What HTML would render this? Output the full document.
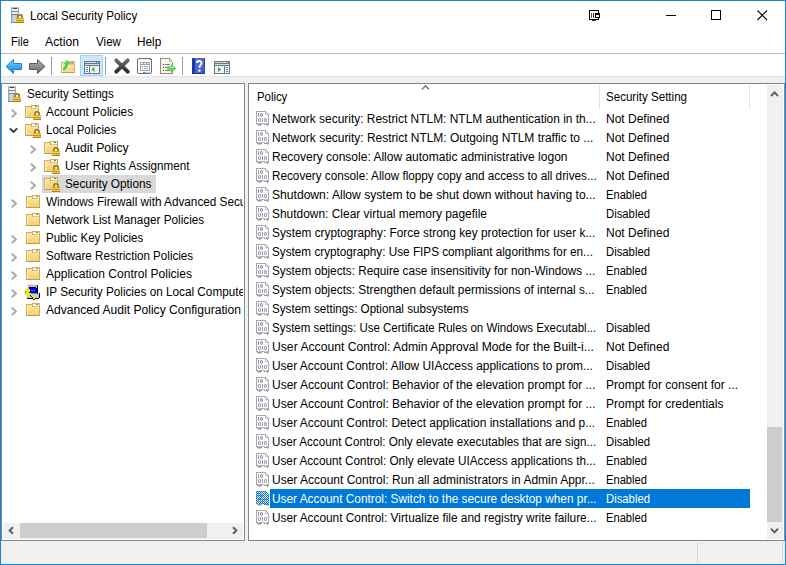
<!DOCTYPE html><html><head><meta charset="utf-8"><style>
html,body{margin:0;padding:0;}
body{width:786px;height:565px;position:relative;overflow:hidden;background:#fff;font-family:'Liberation Sans',sans-serif;font-size:12px;color:#000;}
.t{position:absolute;white-space:pre;line-height:14px;height:14px;}
.a{position:absolute;}
</style></head><body>
<div class="a" style="left:1px;top:77px;width:784px;height:487px;background:#f0f0f0"></div>
<div class="a" style="left:1px;top:53px;width:784px;height:1px;background:#bababa"></div>
<div class="a" style="left:1px;top:76px;width:784px;height:1px;background:#e3e3e3"></div>
<div class="a" style="left:0;top:0;width:784px;height:563px;border:1px solid #1883d7"></div>
<svg style="position:absolute;left:9px;top:5px;" width="18" height="18" viewBox="0 0 18 18" shape-rendering="crispEdges"><rect x="2" y="2" width="8" height="16" fill="#9aa4ac"/><rect x="2" y="2" width="8" height="1" fill="#b8c0c6"/><rect x="3" y="3" width="6" height="14" fill="#b9c4cb"/><rect x="4" y="3" width="4" height="1" fill="#1f4f5f"/><rect x="3" y="4" width="6" height="2" fill="#eef4f7"/><rect x="3" y="6" width="6" height="1" fill="#7a868e"/><rect x="3" y="7" width="6" height="2" fill="#e6eef2"/><rect x="3" y="9" width="6" height="1" fill="#7a868e"/><rect x="3" y="10" width="6" height="7" fill="#b4c2cc"/><rect x="4" y="10" width="3" height="7" fill="#c8d4dc"/><rect x="2" y="17" width="8" height="1" fill="#7c8890"/><rect x="9" y="9" width="4" height="1" fill="#a8873a"/><rect x="8" y="10" width="6" height="3" fill="#a8873a"/><rect x="10" y="11" width="2" height="2" fill="#fbf2cf"/><rect x="7" y="13" width="8" height="5" fill="#c29316"/><rect x="7" y="13" width="8" height="1" fill="#d8aa30"/><rect x="7" y="14" width="8" height="1" fill="#efcd5a"/><rect x="7" y="16" width="8" height="1" fill="#e9c448"/><rect x="7" y="17" width="8" height="1" fill="#a88010"/></svg>
<div class="t" style="left:30px;top:9px;transform:scaleX(0.9682);transform-origin:0 0;">Local Security Policy</div>
<svg style="position:absolute;left:585px;top:5px;" width="20" height="20" viewBox="0 0 20 20" shape-rendering="crispEdges"><rect x="4" y="5" width="10" height="1" fill="#000000"/><rect x="4" y="5" width="1" height="10" fill="#000000"/><rect x="4" y="14" width="10" height="1" fill="#000000"/><rect x="13" y="5" width="1" height="3" fill="#000000"/><rect x="13" y="13" width="1" height="1" fill="#000000"/><rect x="6" y="8" width="1" height="5" fill="#606060"/><rect x="8" y="8" width="1" height="5" fill="#303030"/><rect x="10" y="8" width="5" height="2" fill="#000000"/><rect x="10" y="10" width="1" height="3" fill="#000000"/><rect x="14" y="10" width="1" height="3" fill="#000000"/><rect x="10" y="12" width="5" height="1" fill="#000000"/><rect x="7" y="15" width="4" height="1" fill="#303030"/></svg>
<div class="a" style="left:666px;top:15px;width:10px;height:1px;background:#000"></div>
<div class="a" style="left:711px;top:10px;width:8px;height:8px;border:1px solid #000"></div>
<svg style="position:absolute;left:757px;top:10px;" width="11" height="11" viewBox="0 0 11 11" shape-rendering="crispEdges"><path d="M0.5 0.5 L10 10 M10 0.5 L0.5 10" stroke="#000" stroke-width="1.1" shape-rendering="geometricPrecision"/></svg>
<div class="t" style="left:11px;top:35px;transform:scaleX(0.9202);transform-origin:0 0;">File</div>
<div class="t" style="left:45px;top:35px;transform:scaleX(1.0192);transform-origin:0 0;">Action</div>
<div class="t" style="left:96px;top:35px;transform:scaleX(0.9691);transform-origin:0 0;">View</div>
<div class="t" style="left:137px;top:35px;transform:scaleX(0.9843);transform-origin:0 0;">Help</div>
<div class="a" style="left:1px;top:83px;width:242px;height:456px;border:1px solid #828790;background:#fff"></div>
<div class="a" style="left:248px;top:83px;width:535px;height:456px;border:1px solid #828790;background:#fff"></div>
<div class="a" style="left:697px;top:543px;width:1px;height:20px;background:#d7d7d7"></div>
<div class="a" style="left:782px;top:543px;width:1px;height:20px;background:#d7d7d7"></div>
<div class="a" style="left:2px;top:84px;width:241px;height:438px;overflow:hidden">
<svg class="a" style="left:4px;top:0px" width="18" height="18" shape-rendering="crispEdges"><rect x="2" y="2" width="8" height="16" fill="#9aa4ac"/><rect x="2" y="2" width="8" height="1" fill="#b8c0c6"/><rect x="3" y="3" width="6" height="14" fill="#b9c4cb"/><rect x="4" y="3" width="4" height="1" fill="#1f4f5f"/><rect x="3" y="4" width="6" height="2" fill="#eef4f7"/><rect x="3" y="6" width="6" height="1" fill="#7a868e"/><rect x="3" y="7" width="6" height="2" fill="#e6eef2"/><rect x="3" y="9" width="6" height="1" fill="#7a868e"/><rect x="3" y="10" width="6" height="7" fill="#b4c2cc"/><rect x="4" y="10" width="3" height="7" fill="#c8d4dc"/><rect x="2" y="17" width="8" height="1" fill="#7c8890"/><rect x="9" y="9" width="4" height="1" fill="#a8873a"/><rect x="8" y="10" width="6" height="3" fill="#a8873a"/><rect x="10" y="11" width="2" height="2" fill="#fbf2cf"/><rect x="7" y="13" width="8" height="5" fill="#c29316"/><rect x="7" y="13" width="8" height="1" fill="#d8aa30"/><rect x="7" y="14" width="8" height="1" fill="#efcd5a"/><rect x="7" y="16" width="8" height="1" fill="#e9c448"/><rect x="7" y="17" width="8" height="1" fill="#a88010"/></svg>
<div class="t" style="left:25px;top:3px;transform:scaleX(0.9639);transform-origin:0 0;">Security Settings</div>
<svg class="a" style="left:8px;top:24px" width="8" height="11"><path d="M1.8 1.8 L6 5.5 L1.8 9.2" fill="none" stroke="#a6a6a6" stroke-width="1.8"/></svg>
<svg class="a" style="left:22px;top:19px" width="18" height="18" shape-rendering="crispEdges"><rect x="1" y="3" width="14" height="12" fill="#d3aa58"/><rect x="2" y="4" width="12" height="3" fill="#fae3a0"/><rect x="2" y="7" width="12" height="3" fill="#f8dc8e"/><rect x="2" y="10" width="12" height="4" fill="#f5d47e"/><rect x="2" y="4" width="1" height="10" fill="#fdf0c8"/><rect x="1" y="14" width="14" height="1" fill="#c49a4a"/><rect x="7" y="2" width="8" height="4" fill="#d3aa58"/><rect x="8" y="3" width="6" height="2" fill="#fff2cf"/><rect x="8" y="3" width="3" height="1" fill="#ffffff"/><rect x="11" y="3" width="2" height="1" fill="#3a8ee0"/><rect x="8" y="5" width="6" height="1" fill="#e6c474"/><rect x="8" y="6" width="6" height="1" fill="#fbe6a8"/><rect x="11" y="8" width="4" height="1" fill="#a8873a"/><rect x="10" y="9" width="6" height="3" fill="#a8873a"/><rect x="12" y="10" width="2" height="2" fill="#f8eab8"/><rect x="9" y="12" width="8" height="5" fill="#c5961a"/><rect x="9" y="12" width="8" height="1" fill="#d8aa30"/><rect x="9" y="13" width="8" height="1" fill="#f2d25c"/><rect x="9" y="15" width="8" height="1" fill="#ecc84a"/><rect x="9" y="16" width="8" height="1" fill="#b08410"/></svg>
<div class="t" style="left:44px;top:21px;transform:scaleX(0.9892);transform-origin:0 0;">Account Policies</div>
<svg class="a" style="left:6px;top:42px" width="11" height="9"><path d="M1.8 2.3 L5.5 6 L9.2 2.3" fill="none" stroke="#3c3c3c" stroke-width="1.9"/></svg>
<svg class="a" style="left:22px;top:37px" width="18" height="18" shape-rendering="crispEdges"><rect x="1" y="3" width="14" height="12" fill="#d3aa58"/><rect x="2" y="4" width="12" height="3" fill="#fae3a0"/><rect x="2" y="7" width="12" height="3" fill="#f8dc8e"/><rect x="2" y="10" width="12" height="4" fill="#f5d47e"/><rect x="2" y="4" width="1" height="10" fill="#fdf0c8"/><rect x="1" y="14" width="14" height="1" fill="#c49a4a"/><rect x="7" y="2" width="8" height="4" fill="#d3aa58"/><rect x="8" y="3" width="6" height="2" fill="#fff2cf"/><rect x="8" y="3" width="3" height="1" fill="#ffffff"/><rect x="11" y="3" width="2" height="1" fill="#3a8ee0"/><rect x="8" y="5" width="6" height="1" fill="#e6c474"/><rect x="8" y="6" width="6" height="1" fill="#fbe6a8"/><rect x="11" y="8" width="4" height="1" fill="#a8873a"/><rect x="10" y="9" width="6" height="3" fill="#a8873a"/><rect x="12" y="10" width="2" height="2" fill="#f8eab8"/><rect x="9" y="12" width="8" height="5" fill="#c5961a"/><rect x="9" y="12" width="8" height="1" fill="#d8aa30"/><rect x="9" y="13" width="8" height="1" fill="#f2d25c"/><rect x="9" y="15" width="8" height="1" fill="#ecc84a"/><rect x="9" y="16" width="8" height="1" fill="#b08410"/></svg>
<div class="t" style="left:44px;top:39px;transform:scaleX(0.9567);transform-origin:0 0;">Local Policies</div>
<svg class="a" style="left:27px;top:60px" width="8" height="11"><path d="M1.8 1.8 L6 5.5 L1.8 9.2" fill="none" stroke="#a6a6a6" stroke-width="1.8"/></svg>
<svg class="a" style="left:41px;top:55px" width="18" height="18" shape-rendering="crispEdges"><rect x="1" y="3" width="14" height="12" fill="#d3aa58"/><rect x="2" y="4" width="12" height="3" fill="#fae3a0"/><rect x="2" y="7" width="12" height="3" fill="#f8dc8e"/><rect x="2" y="10" width="12" height="4" fill="#f5d47e"/><rect x="2" y="4" width="1" height="10" fill="#fdf0c8"/><rect x="1" y="14" width="14" height="1" fill="#c49a4a"/><rect x="7" y="2" width="8" height="4" fill="#d3aa58"/><rect x="8" y="3" width="6" height="2" fill="#fff2cf"/><rect x="8" y="3" width="3" height="1" fill="#ffffff"/><rect x="11" y="3" width="2" height="1" fill="#3a8ee0"/><rect x="8" y="5" width="6" height="1" fill="#e6c474"/><rect x="8" y="6" width="6" height="1" fill="#fbe6a8"/><rect x="11" y="8" width="4" height="1" fill="#a8873a"/><rect x="10" y="9" width="6" height="3" fill="#a8873a"/><rect x="12" y="10" width="2" height="2" fill="#f8eab8"/><rect x="9" y="12" width="8" height="5" fill="#c5961a"/><rect x="9" y="12" width="8" height="1" fill="#d8aa30"/><rect x="9" y="13" width="8" height="1" fill="#f2d25c"/><rect x="9" y="15" width="8" height="1" fill="#ecc84a"/><rect x="9" y="16" width="8" height="1" fill="#b08410"/></svg>
<div class="t" style="left:63px;top:57px;transform:scaleX(1.0159);transform-origin:0 0;">Audit Policy</div>
<svg class="a" style="left:27px;top:78px" width="8" height="11"><path d="M1.8 1.8 L6 5.5 L1.8 9.2" fill="none" stroke="#a6a6a6" stroke-width="1.8"/></svg>
<svg class="a" style="left:41px;top:73px" width="18" height="18" shape-rendering="crispEdges"><rect x="1" y="3" width="14" height="12" fill="#d3aa58"/><rect x="2" y="4" width="12" height="3" fill="#fae3a0"/><rect x="2" y="7" width="12" height="3" fill="#f8dc8e"/><rect x="2" y="10" width="12" height="4" fill="#f5d47e"/><rect x="2" y="4" width="1" height="10" fill="#fdf0c8"/><rect x="1" y="14" width="14" height="1" fill="#c49a4a"/><rect x="7" y="2" width="8" height="4" fill="#d3aa58"/><rect x="8" y="3" width="6" height="2" fill="#fff2cf"/><rect x="8" y="3" width="3" height="1" fill="#ffffff"/><rect x="11" y="3" width="2" height="1" fill="#3a8ee0"/><rect x="8" y="5" width="6" height="1" fill="#e6c474"/><rect x="8" y="6" width="6" height="1" fill="#fbe6a8"/><rect x="11" y="8" width="4" height="1" fill="#a8873a"/><rect x="10" y="9" width="6" height="3" fill="#a8873a"/><rect x="12" y="10" width="2" height="2" fill="#f8eab8"/><rect x="9" y="12" width="8" height="5" fill="#c5961a"/><rect x="9" y="12" width="8" height="1" fill="#d8aa30"/><rect x="9" y="13" width="8" height="1" fill="#f2d25c"/><rect x="9" y="15" width="8" height="1" fill="#ecc84a"/><rect x="9" y="16" width="8" height="1" fill="#b08410"/></svg>
<div class="t" style="left:63px;top:75px;transform:scaleX(0.9714);transform-origin:0 0;">User Rights Assignment</div>
<div class="a" style="left:40px;top:91px;width:114px;height:18px;background:#d9d9d9"></div>
<svg class="a" style="left:27px;top:96px" width="8" height="11"><path d="M1.8 1.8 L6 5.5 L1.8 9.2" fill="none" stroke="#a6a6a6" stroke-width="1.8"/></svg>
<svg class="a" style="left:41px;top:91px" width="18" height="18" shape-rendering="crispEdges"><rect x="1" y="3" width="14" height="12" fill="#d3aa58"/><rect x="2" y="4" width="12" height="3" fill="#fae3a0"/><rect x="2" y="7" width="12" height="3" fill="#f8dc8e"/><rect x="2" y="10" width="12" height="4" fill="#f5d47e"/><rect x="2" y="4" width="1" height="10" fill="#fdf0c8"/><rect x="1" y="14" width="14" height="1" fill="#c49a4a"/><rect x="7" y="2" width="8" height="4" fill="#d3aa58"/><rect x="8" y="3" width="6" height="2" fill="#fff2cf"/><rect x="8" y="3" width="3" height="1" fill="#ffffff"/><rect x="11" y="3" width="2" height="1" fill="#3a8ee0"/><rect x="8" y="5" width="6" height="1" fill="#e6c474"/><rect x="8" y="6" width="6" height="1" fill="#fbe6a8"/><rect x="11" y="8" width="4" height="1" fill="#a8873a"/><rect x="10" y="9" width="6" height="3" fill="#a8873a"/><rect x="12" y="10" width="2" height="2" fill="#f8eab8"/><rect x="9" y="12" width="8" height="5" fill="#c5961a"/><rect x="9" y="12" width="8" height="1" fill="#d8aa30"/><rect x="9" y="13" width="8" height="1" fill="#f2d25c"/><rect x="9" y="15" width="8" height="1" fill="#ecc84a"/><rect x="9" y="16" width="8" height="1" fill="#b08410"/></svg>
<div class="t" style="left:63px;top:93px;transform:scaleX(0.9824);transform-origin:0 0;">Security Options</div>
<svg class="a" style="left:8px;top:114px" width="8" height="11"><path d="M1.8 1.8 L6 5.5 L1.8 9.2" fill="none" stroke="#a6a6a6" stroke-width="1.8"/></svg>
<svg class="a" style="left:22px;top:109px" width="18" height="18" shape-rendering="crispEdges"><rect x="2" y="3" width="14" height="12" fill="#d3aa58"/><rect x="3" y="4" width="12" height="3" fill="#fae3a0"/><rect x="3" y="7" width="12" height="3" fill="#f8dc8e"/><rect x="3" y="10" width="12" height="4" fill="#f5d47e"/><rect x="3" y="4" width="1" height="10" fill="#fdf0c8"/><rect x="2" y="14" width="14" height="1" fill="#c49a4a"/><rect x="8" y="2" width="8" height="4" fill="#d3aa58"/><rect x="9" y="3" width="6" height="2" fill="#fff2cf"/><rect x="9" y="3" width="3" height="1" fill="#ffffff"/><rect x="12" y="3" width="2" height="1" fill="#3a8ee0"/><rect x="9" y="5" width="6" height="1" fill="#e6c474"/><rect x="9" y="6" width="6" height="1" fill="#fbe6a8"/></svg>
<div class="t" style="left:44px;top:111px;transform:scaleX(0.9784);transform-origin:0 0;">Windows Firewall with Advanced Security</div>
<svg class="a" style="left:22px;top:127px" width="18" height="18" shape-rendering="crispEdges"><rect x="2" y="3" width="14" height="12" fill="#d3aa58"/><rect x="3" y="4" width="12" height="3" fill="#fae3a0"/><rect x="3" y="7" width="12" height="3" fill="#f8dc8e"/><rect x="3" y="10" width="12" height="4" fill="#f5d47e"/><rect x="3" y="4" width="1" height="10" fill="#fdf0c8"/><rect x="2" y="14" width="14" height="1" fill="#c49a4a"/><rect x="8" y="2" width="8" height="4" fill="#d3aa58"/><rect x="9" y="3" width="6" height="2" fill="#fff2cf"/><rect x="9" y="3" width="3" height="1" fill="#ffffff"/><rect x="12" y="3" width="2" height="1" fill="#3a8ee0"/><rect x="9" y="5" width="6" height="1" fill="#e6c474"/><rect x="9" y="6" width="6" height="1" fill="#fbe6a8"/></svg>
<div class="t" style="left:44px;top:129px;transform:scaleX(0.9801);transform-origin:0 0;">Network List Manager Policies</div>
<svg class="a" style="left:8px;top:150px" width="8" height="11"><path d="M1.8 1.8 L6 5.5 L1.8 9.2" fill="none" stroke="#a6a6a6" stroke-width="1.8"/></svg>
<svg class="a" style="left:22px;top:145px" width="18" height="18" shape-rendering="crispEdges"><rect x="2" y="3" width="14" height="12" fill="#d3aa58"/><rect x="3" y="4" width="12" height="3" fill="#fae3a0"/><rect x="3" y="7" width="12" height="3" fill="#f8dc8e"/><rect x="3" y="10" width="12" height="4" fill="#f5d47e"/><rect x="3" y="4" width="1" height="10" fill="#fdf0c8"/><rect x="2" y="14" width="14" height="1" fill="#c49a4a"/><rect x="8" y="2" width="8" height="4" fill="#d3aa58"/><rect x="9" y="3" width="6" height="2" fill="#fff2cf"/><rect x="9" y="3" width="3" height="1" fill="#ffffff"/><rect x="12" y="3" width="2" height="1" fill="#3a8ee0"/><rect x="9" y="5" width="6" height="1" fill="#e6c474"/><rect x="9" y="6" width="6" height="1" fill="#fbe6a8"/></svg>
<div class="t" style="left:44px;top:147px;transform:scaleX(0.9587);transform-origin:0 0;">Public Key Policies</div>
<svg class="a" style="left:8px;top:168px" width="8" height="11"><path d="M1.8 1.8 L6 5.5 L1.8 9.2" fill="none" stroke="#a6a6a6" stroke-width="1.8"/></svg>
<svg class="a" style="left:22px;top:163px" width="18" height="18" shape-rendering="crispEdges"><rect x="2" y="3" width="14" height="12" fill="#d3aa58"/><rect x="3" y="4" width="12" height="3" fill="#fae3a0"/><rect x="3" y="7" width="12" height="3" fill="#f8dc8e"/><rect x="3" y="10" width="12" height="4" fill="#f5d47e"/><rect x="3" y="4" width="1" height="10" fill="#fdf0c8"/><rect x="2" y="14" width="14" height="1" fill="#c49a4a"/><rect x="8" y="2" width="8" height="4" fill="#d3aa58"/><rect x="9" y="3" width="6" height="2" fill="#fff2cf"/><rect x="9" y="3" width="3" height="1" fill="#ffffff"/><rect x="12" y="3" width="2" height="1" fill="#3a8ee0"/><rect x="9" y="5" width="6" height="1" fill="#e6c474"/><rect x="9" y="6" width="6" height="1" fill="#fbe6a8"/></svg>
<div class="t" style="left:44px;top:165px;transform:scaleX(0.9674);transform-origin:0 0;">Software Restriction Policies</div>
<svg class="a" style="left:8px;top:186px" width="8" height="11"><path d="M1.8 1.8 L6 5.5 L1.8 9.2" fill="none" stroke="#a6a6a6" stroke-width="1.8"/></svg>
<svg class="a" style="left:22px;top:181px" width="18" height="18" shape-rendering="crispEdges"><rect x="2" y="3" width="14" height="12" fill="#d3aa58"/><rect x="3" y="4" width="12" height="3" fill="#fae3a0"/><rect x="3" y="7" width="12" height="3" fill="#f8dc8e"/><rect x="3" y="10" width="12" height="4" fill="#f5d47e"/><rect x="3" y="4" width="1" height="10" fill="#fdf0c8"/><rect x="2" y="14" width="14" height="1" fill="#c49a4a"/><rect x="8" y="2" width="8" height="4" fill="#d3aa58"/><rect x="9" y="3" width="6" height="2" fill="#fff2cf"/><rect x="9" y="3" width="3" height="1" fill="#ffffff"/><rect x="12" y="3" width="2" height="1" fill="#3a8ee0"/><rect x="9" y="5" width="6" height="1" fill="#e6c474"/><rect x="9" y="6" width="6" height="1" fill="#fbe6a8"/></svg>
<div class="t" style="left:44px;top:183px;transform:scaleX(1.0041);transform-origin:0 0;">Application Control Policies</div>
<svg class="a" style="left:8px;top:204px" width="8" height="11"><path d="M1.8 1.8 L6 5.5 L1.8 9.2" fill="none" stroke="#a6a6a6" stroke-width="1.8"/></svg>
<svg class="a" style="left:22px;top:199px" width="18" height="18" shape-rendering="crispEdges"><rect x="4" y="1" width="9" height="1" fill="#e4e4e4"/><rect x="3" y="2" width="10" height="8" fill="#c0c0c0"/><rect x="3" y="2" width="1" height="8" fill="#e0e0e0"/><rect x="13" y="2" width="1" height="9" fill="#000000"/><rect x="5" y="4" width="7" height="1" fill="#000000"/><rect x="5" y="4" width="1" height="6" fill="#000000"/><rect x="6" y="5" width="7" height="5" fill="#0000f0"/><rect x="7" y="7" width="4" height="1" fill="#1f8f8f"/><rect x="4" y="10" width="9" height="1" fill="#909090"/><rect x="2" y="11" width="13" height="4" fill="#c8c8c8"/><rect x="2" y="11" width="1" height="4" fill="#e8e8e8"/><rect x="15" y="10" width="1" height="5" fill="#000000"/><rect x="3" y="15" width="12" height="1" fill="#000000"/><rect x="1" y="6" width="5" height="6" fill="#f0f000"/><rect x="1" y="8" width="1" height="2" fill="#909000"/><rect x="3" y="8" width="2" height="1" fill="#b8b8d8"/><rect x="5" y="10" width="2" height="2" fill="#f0f000"/><rect x="6" y="11" width="2" height="2" fill="#f0f000"/><rect x="7" y="12" width="2" height="2" fill="#f0f000"/><rect x="8" y="13" width="2" height="2" fill="#f0f000"/><rect x="9" y="14" width="2" height="2" fill="#f0f000"/><rect x="6" y="12" width="1" height="1" fill="#202020"/><rect x="7" y="13" width="1" height="1" fill="#202020"/><rect x="8" y="14" width="1" height="1" fill="#202020"/><rect x="9" y="16" width="2" height="1" fill="#202020"/><rect x="5" y="9" width="1" height="1" fill="#202020"/></svg>
<div class="t" style="left:44px;top:201px;transform:scaleX(0.9796);transform-origin:0 0;">IP Security Policies on Local Computer</div>
<svg class="a" style="left:8px;top:222px" width="8" height="11"><path d="M1.8 1.8 L6 5.5 L1.8 9.2" fill="none" stroke="#a6a6a6" stroke-width="1.8"/></svg>
<svg class="a" style="left:22px;top:217px" width="18" height="18" shape-rendering="crispEdges"><rect x="2" y="3" width="14" height="12" fill="#d3aa58"/><rect x="3" y="4" width="12" height="3" fill="#fae3a0"/><rect x="3" y="7" width="12" height="3" fill="#f8dc8e"/><rect x="3" y="10" width="12" height="4" fill="#f5d47e"/><rect x="3" y="4" width="1" height="10" fill="#fdf0c8"/><rect x="2" y="14" width="14" height="1" fill="#c49a4a"/><rect x="8" y="2" width="8" height="4" fill="#d3aa58"/><rect x="9" y="3" width="6" height="2" fill="#fff2cf"/><rect x="9" y="3" width="3" height="1" fill="#ffffff"/><rect x="12" y="3" width="2" height="1" fill="#3a8ee0"/><rect x="9" y="5" width="6" height="1" fill="#e6c474"/><rect x="9" y="6" width="6" height="1" fill="#fbe6a8"/></svg>
<div class="t" style="left:44px;top:219px;transform:scaleX(1.0080);transform-origin:0 0;">Advanced Audit Policy Configuration</div>
</div>
<div class="t" style="left:257px;top:90px;transform:scaleX(0.9464);transform-origin:0 0;">Policy</div>
<div class="t" style="left:606px;top:90px;transform:scaleX(0.9637);transform-origin:0 0;">Security Setting</div>
<div class="a" style="left:599px;top:85px;width:1px;height:24px;background:#e5e5e5"></div>
<div class="a" style="left:749px;top:85px;width:1px;height:24px;background:#e5e5e5"></div>
<svg style="position:absolute;left:421px;top:84px;" width="9" height="7" viewBox="0 0 9 7" shape-rendering="crispEdges"><path d="M1 5.3 L4.5 1.8 L8 5.3" fill="none" stroke="#5a5a5a" stroke-width="1.2" shape-rendering="geometricPrecision"/></svg>
<svg style="position:absolute;left:254px;top:110px;" width="18" height="18" viewBox="0 0 18 18" shape-rendering="crispEdges"><rect x="2" y="1" width="10" height="1" fill="#a8a8a8"/><rect x="2" y="1" width="1" height="12" fill="#a8a8a8"/><rect x="3" y="2" width="9" height="11" fill="#fdfdfd"/><rect x="12" y="2" width="1" height="1" fill="#a8a8a8"/><rect x="13" y="3" width="1" height="1" fill="#a8a8a8"/><rect x="14" y="4" width="1" height="9" fill="#a8a8a8"/><rect x="11" y="2" width="1" height="3" fill="#c4c4c4"/><rect x="11" y="4" width="3" height="1" fill="#c4c4c4"/><rect x="12" y="3" width="1" height="1" fill="#f4f4f4"/><rect x="3" y="12" width="11" height="1" fill="#fdfdfd"/><rect x="4" y="3" width="1" height="4" fill="#9898bc"/><rect x="6" y="3" width="3" height="4" fill="#d4d4e4"/><rect x="6" y="4" width="1" height="2" fill="#9898bc"/><rect x="8" y="4" width="1" height="2" fill="#9898bc"/><rect x="7" y="3" width="1" height="1" fill="#9898bc"/><rect x="7" y="6" width="1" height="1" fill="#9898bc"/><rect x="4" y="8" width="3" height="4" fill="#d4d4e4"/><rect x="5" y="9" width="1" height="2" fill="#fdfdfd"/><rect x="4" y="9" width="1" height="2" fill="#9898bc"/><rect x="6" y="9" width="1" height="2" fill="#9898bc"/><rect x="5" y="8" width="1" height="1" fill="#9898bc"/><rect x="5" y="11" width="1" height="1" fill="#9898bc"/><rect x="8" y="8" width="1" height="4" fill="#9898bc"/><rect x="10" y="8" width="3" height="4" fill="#d4d4e4"/><rect x="11" y="9" width="1" height="2" fill="#fdfdfd"/><rect x="10" y="9" width="1" height="2" fill="#9898bc"/><rect x="12" y="9" width="1" height="2" fill="#9898bc"/><rect x="11" y="8" width="1" height="1" fill="#9898bc"/><rect x="11" y="11" width="1" height="1" fill="#9898bc"/><rect x="2" y="13" width="2" height="1" fill="#a0a0a0"/><rect x="3" y="14" width="5" height="1" fill="#9a9a9a"/><rect x="5" y="13" width="4" height="1" fill="#b0b0b0"/><rect x="4" y="15" width="3" height="1" fill="#c8c8c8"/><rect x="9" y="13" width="2" height="1" fill="#b4b4b4"/><rect x="10" y="14" width="3" height="1" fill="#a4a4a4"/><rect x="12" y="13" width="2" height="1" fill="#b8b8b8"/><rect x="13" y="14" width="1" height="2" fill="#9c9c9c"/><rect x="14" y="13" width="1" height="2" fill="#a8a8a8"/></svg>
<div class="t" style="left:272px;top:112px;transform:scaleX(0.9947);transform-origin:0 0;color:#000">Network security: Restrict NTLM: NTLM authentication in th...</div>
<div class="t" style="left:606px;top:112px;color:#000">Not Defined</div>
<svg style="position:absolute;left:254px;top:129px;" width="18" height="18" viewBox="0 0 18 18" shape-rendering="crispEdges"><rect x="2" y="1" width="10" height="1" fill="#a8a8a8"/><rect x="2" y="1" width="1" height="12" fill="#a8a8a8"/><rect x="3" y="2" width="9" height="11" fill="#fdfdfd"/><rect x="12" y="2" width="1" height="1" fill="#a8a8a8"/><rect x="13" y="3" width="1" height="1" fill="#a8a8a8"/><rect x="14" y="4" width="1" height="9" fill="#a8a8a8"/><rect x="11" y="2" width="1" height="3" fill="#c4c4c4"/><rect x="11" y="4" width="3" height="1" fill="#c4c4c4"/><rect x="12" y="3" width="1" height="1" fill="#f4f4f4"/><rect x="3" y="12" width="11" height="1" fill="#fdfdfd"/><rect x="4" y="3" width="1" height="4" fill="#9898bc"/><rect x="6" y="3" width="3" height="4" fill="#d4d4e4"/><rect x="6" y="4" width="1" height="2" fill="#9898bc"/><rect x="8" y="4" width="1" height="2" fill="#9898bc"/><rect x="7" y="3" width="1" height="1" fill="#9898bc"/><rect x="7" y="6" width="1" height="1" fill="#9898bc"/><rect x="4" y="8" width="3" height="4" fill="#d4d4e4"/><rect x="5" y="9" width="1" height="2" fill="#fdfdfd"/><rect x="4" y="9" width="1" height="2" fill="#9898bc"/><rect x="6" y="9" width="1" height="2" fill="#9898bc"/><rect x="5" y="8" width="1" height="1" fill="#9898bc"/><rect x="5" y="11" width="1" height="1" fill="#9898bc"/><rect x="8" y="8" width="1" height="4" fill="#9898bc"/><rect x="10" y="8" width="3" height="4" fill="#d4d4e4"/><rect x="11" y="9" width="1" height="2" fill="#fdfdfd"/><rect x="10" y="9" width="1" height="2" fill="#9898bc"/><rect x="12" y="9" width="1" height="2" fill="#9898bc"/><rect x="11" y="8" width="1" height="1" fill="#9898bc"/><rect x="11" y="11" width="1" height="1" fill="#9898bc"/><rect x="2" y="13" width="2" height="1" fill="#a0a0a0"/><rect x="3" y="14" width="5" height="1" fill="#9a9a9a"/><rect x="5" y="13" width="4" height="1" fill="#b0b0b0"/><rect x="4" y="15" width="3" height="1" fill="#c8c8c8"/><rect x="9" y="13" width="2" height="1" fill="#b4b4b4"/><rect x="10" y="14" width="3" height="1" fill="#a4a4a4"/><rect x="12" y="13" width="2" height="1" fill="#b8b8b8"/><rect x="13" y="14" width="1" height="2" fill="#9c9c9c"/><rect x="14" y="13" width="1" height="2" fill="#a8a8a8"/></svg>
<div class="t" style="left:272px;top:131px;transform:scaleX(0.9959);transform-origin:0 0;color:#000">Network security: Restrict NTLM: Outgoing NTLM traffic to ...</div>
<div class="t" style="left:606px;top:131px;color:#000">Not Defined</div>
<svg style="position:absolute;left:254px;top:148px;" width="18" height="18" viewBox="0 0 18 18" shape-rendering="crispEdges"><rect x="2" y="1" width="10" height="1" fill="#a8a8a8"/><rect x="2" y="1" width="1" height="12" fill="#a8a8a8"/><rect x="3" y="2" width="9" height="11" fill="#fdfdfd"/><rect x="12" y="2" width="1" height="1" fill="#a8a8a8"/><rect x="13" y="3" width="1" height="1" fill="#a8a8a8"/><rect x="14" y="4" width="1" height="9" fill="#a8a8a8"/><rect x="11" y="2" width="1" height="3" fill="#c4c4c4"/><rect x="11" y="4" width="3" height="1" fill="#c4c4c4"/><rect x="12" y="3" width="1" height="1" fill="#f4f4f4"/><rect x="3" y="12" width="11" height="1" fill="#fdfdfd"/><rect x="4" y="3" width="1" height="4" fill="#9898bc"/><rect x="6" y="3" width="3" height="4" fill="#d4d4e4"/><rect x="6" y="4" width="1" height="2" fill="#9898bc"/><rect x="8" y="4" width="1" height="2" fill="#9898bc"/><rect x="7" y="3" width="1" height="1" fill="#9898bc"/><rect x="7" y="6" width="1" height="1" fill="#9898bc"/><rect x="4" y="8" width="3" height="4" fill="#d4d4e4"/><rect x="5" y="9" width="1" height="2" fill="#fdfdfd"/><rect x="4" y="9" width="1" height="2" fill="#9898bc"/><rect x="6" y="9" width="1" height="2" fill="#9898bc"/><rect x="5" y="8" width="1" height="1" fill="#9898bc"/><rect x="5" y="11" width="1" height="1" fill="#9898bc"/><rect x="8" y="8" width="1" height="4" fill="#9898bc"/><rect x="10" y="8" width="3" height="4" fill="#d4d4e4"/><rect x="11" y="9" width="1" height="2" fill="#fdfdfd"/><rect x="10" y="9" width="1" height="2" fill="#9898bc"/><rect x="12" y="9" width="1" height="2" fill="#9898bc"/><rect x="11" y="8" width="1" height="1" fill="#9898bc"/><rect x="11" y="11" width="1" height="1" fill="#9898bc"/><rect x="2" y="13" width="2" height="1" fill="#a0a0a0"/><rect x="3" y="14" width="5" height="1" fill="#9a9a9a"/><rect x="5" y="13" width="4" height="1" fill="#b0b0b0"/><rect x="4" y="15" width="3" height="1" fill="#c8c8c8"/><rect x="9" y="13" width="2" height="1" fill="#b4b4b4"/><rect x="10" y="14" width="3" height="1" fill="#a4a4a4"/><rect x="12" y="13" width="2" height="1" fill="#b8b8b8"/><rect x="13" y="14" width="1" height="2" fill="#9c9c9c"/><rect x="14" y="13" width="1" height="2" fill="#a8a8a8"/></svg>
<div class="t" style="left:272px;top:150px;color:#000">Recovery console: Allow automatic administrative logon</div>
<div class="t" style="left:606px;top:150px;color:#000">Not Defined</div>
<svg style="position:absolute;left:254px;top:167px;" width="18" height="18" viewBox="0 0 18 18" shape-rendering="crispEdges"><rect x="2" y="1" width="10" height="1" fill="#a8a8a8"/><rect x="2" y="1" width="1" height="12" fill="#a8a8a8"/><rect x="3" y="2" width="9" height="11" fill="#fdfdfd"/><rect x="12" y="2" width="1" height="1" fill="#a8a8a8"/><rect x="13" y="3" width="1" height="1" fill="#a8a8a8"/><rect x="14" y="4" width="1" height="9" fill="#a8a8a8"/><rect x="11" y="2" width="1" height="3" fill="#c4c4c4"/><rect x="11" y="4" width="3" height="1" fill="#c4c4c4"/><rect x="12" y="3" width="1" height="1" fill="#f4f4f4"/><rect x="3" y="12" width="11" height="1" fill="#fdfdfd"/><rect x="4" y="3" width="1" height="4" fill="#9898bc"/><rect x="6" y="3" width="3" height="4" fill="#d4d4e4"/><rect x="6" y="4" width="1" height="2" fill="#9898bc"/><rect x="8" y="4" width="1" height="2" fill="#9898bc"/><rect x="7" y="3" width="1" height="1" fill="#9898bc"/><rect x="7" y="6" width="1" height="1" fill="#9898bc"/><rect x="4" y="8" width="3" height="4" fill="#d4d4e4"/><rect x="5" y="9" width="1" height="2" fill="#fdfdfd"/><rect x="4" y="9" width="1" height="2" fill="#9898bc"/><rect x="6" y="9" width="1" height="2" fill="#9898bc"/><rect x="5" y="8" width="1" height="1" fill="#9898bc"/><rect x="5" y="11" width="1" height="1" fill="#9898bc"/><rect x="8" y="8" width="1" height="4" fill="#9898bc"/><rect x="10" y="8" width="3" height="4" fill="#d4d4e4"/><rect x="11" y="9" width="1" height="2" fill="#fdfdfd"/><rect x="10" y="9" width="1" height="2" fill="#9898bc"/><rect x="12" y="9" width="1" height="2" fill="#9898bc"/><rect x="11" y="8" width="1" height="1" fill="#9898bc"/><rect x="11" y="11" width="1" height="1" fill="#9898bc"/><rect x="2" y="13" width="2" height="1" fill="#a0a0a0"/><rect x="3" y="14" width="5" height="1" fill="#9a9a9a"/><rect x="5" y="13" width="4" height="1" fill="#b0b0b0"/><rect x="4" y="15" width="3" height="1" fill="#c8c8c8"/><rect x="9" y="13" width="2" height="1" fill="#b4b4b4"/><rect x="10" y="14" width="3" height="1" fill="#a4a4a4"/><rect x="12" y="13" width="2" height="1" fill="#b8b8b8"/><rect x="13" y="14" width="1" height="2" fill="#9c9c9c"/><rect x="14" y="13" width="1" height="2" fill="#a8a8a8"/></svg>
<div class="t" style="left:272px;top:169px;transform:scaleX(0.9775);transform-origin:0 0;color:#000">Recovery console: Allow floppy copy and access to all drives...</div>
<div class="t" style="left:606px;top:169px;color:#000">Not Defined</div>
<svg style="position:absolute;left:254px;top:186px;" width="18" height="18" viewBox="0 0 18 18" shape-rendering="crispEdges"><rect x="2" y="1" width="10" height="1" fill="#a8a8a8"/><rect x="2" y="1" width="1" height="12" fill="#a8a8a8"/><rect x="3" y="2" width="9" height="11" fill="#fdfdfd"/><rect x="12" y="2" width="1" height="1" fill="#a8a8a8"/><rect x="13" y="3" width="1" height="1" fill="#a8a8a8"/><rect x="14" y="4" width="1" height="9" fill="#a8a8a8"/><rect x="11" y="2" width="1" height="3" fill="#c4c4c4"/><rect x="11" y="4" width="3" height="1" fill="#c4c4c4"/><rect x="12" y="3" width="1" height="1" fill="#f4f4f4"/><rect x="3" y="12" width="11" height="1" fill="#fdfdfd"/><rect x="4" y="3" width="1" height="4" fill="#9898bc"/><rect x="6" y="3" width="3" height="4" fill="#d4d4e4"/><rect x="6" y="4" width="1" height="2" fill="#9898bc"/><rect x="8" y="4" width="1" height="2" fill="#9898bc"/><rect x="7" y="3" width="1" height="1" fill="#9898bc"/><rect x="7" y="6" width="1" height="1" fill="#9898bc"/><rect x="4" y="8" width="3" height="4" fill="#d4d4e4"/><rect x="5" y="9" width="1" height="2" fill="#fdfdfd"/><rect x="4" y="9" width="1" height="2" fill="#9898bc"/><rect x="6" y="9" width="1" height="2" fill="#9898bc"/><rect x="5" y="8" width="1" height="1" fill="#9898bc"/><rect x="5" y="11" width="1" height="1" fill="#9898bc"/><rect x="8" y="8" width="1" height="4" fill="#9898bc"/><rect x="10" y="8" width="3" height="4" fill="#d4d4e4"/><rect x="11" y="9" width="1" height="2" fill="#fdfdfd"/><rect x="10" y="9" width="1" height="2" fill="#9898bc"/><rect x="12" y="9" width="1" height="2" fill="#9898bc"/><rect x="11" y="8" width="1" height="1" fill="#9898bc"/><rect x="11" y="11" width="1" height="1" fill="#9898bc"/><rect x="2" y="13" width="2" height="1" fill="#a0a0a0"/><rect x="3" y="14" width="5" height="1" fill="#9a9a9a"/><rect x="5" y="13" width="4" height="1" fill="#b0b0b0"/><rect x="4" y="15" width="3" height="1" fill="#c8c8c8"/><rect x="9" y="13" width="2" height="1" fill="#b4b4b4"/><rect x="10" y="14" width="3" height="1" fill="#a4a4a4"/><rect x="12" y="13" width="2" height="1" fill="#b8b8b8"/><rect x="13" y="14" width="1" height="2" fill="#9c9c9c"/><rect x="14" y="13" width="1" height="2" fill="#a8a8a8"/></svg>
<div class="t" style="left:272px;top:188px;transform:scaleX(1.0089);transform-origin:0 0;color:#000">Shutdown: Allow system to be shut down without having to...</div>
<div class="t" style="left:606px;top:188px;transform:scaleX(0.9286);transform-origin:0 0;color:#000">Enabled</div>
<svg style="position:absolute;left:254px;top:205px;" width="18" height="18" viewBox="0 0 18 18" shape-rendering="crispEdges"><rect x="2" y="1" width="10" height="1" fill="#a8a8a8"/><rect x="2" y="1" width="1" height="12" fill="#a8a8a8"/><rect x="3" y="2" width="9" height="11" fill="#fdfdfd"/><rect x="12" y="2" width="1" height="1" fill="#a8a8a8"/><rect x="13" y="3" width="1" height="1" fill="#a8a8a8"/><rect x="14" y="4" width="1" height="9" fill="#a8a8a8"/><rect x="11" y="2" width="1" height="3" fill="#c4c4c4"/><rect x="11" y="4" width="3" height="1" fill="#c4c4c4"/><rect x="12" y="3" width="1" height="1" fill="#f4f4f4"/><rect x="3" y="12" width="11" height="1" fill="#fdfdfd"/><rect x="4" y="3" width="1" height="4" fill="#9898bc"/><rect x="6" y="3" width="3" height="4" fill="#d4d4e4"/><rect x="6" y="4" width="1" height="2" fill="#9898bc"/><rect x="8" y="4" width="1" height="2" fill="#9898bc"/><rect x="7" y="3" width="1" height="1" fill="#9898bc"/><rect x="7" y="6" width="1" height="1" fill="#9898bc"/><rect x="4" y="8" width="3" height="4" fill="#d4d4e4"/><rect x="5" y="9" width="1" height="2" fill="#fdfdfd"/><rect x="4" y="9" width="1" height="2" fill="#9898bc"/><rect x="6" y="9" width="1" height="2" fill="#9898bc"/><rect x="5" y="8" width="1" height="1" fill="#9898bc"/><rect x="5" y="11" width="1" height="1" fill="#9898bc"/><rect x="8" y="8" width="1" height="4" fill="#9898bc"/><rect x="10" y="8" width="3" height="4" fill="#d4d4e4"/><rect x="11" y="9" width="1" height="2" fill="#fdfdfd"/><rect x="10" y="9" width="1" height="2" fill="#9898bc"/><rect x="12" y="9" width="1" height="2" fill="#9898bc"/><rect x="11" y="8" width="1" height="1" fill="#9898bc"/><rect x="11" y="11" width="1" height="1" fill="#9898bc"/><rect x="2" y="13" width="2" height="1" fill="#a0a0a0"/><rect x="3" y="14" width="5" height="1" fill="#9a9a9a"/><rect x="5" y="13" width="4" height="1" fill="#b0b0b0"/><rect x="4" y="15" width="3" height="1" fill="#c8c8c8"/><rect x="9" y="13" width="2" height="1" fill="#b4b4b4"/><rect x="10" y="14" width="3" height="1" fill="#a4a4a4"/><rect x="12" y="13" width="2" height="1" fill="#b8b8b8"/><rect x="13" y="14" width="1" height="2" fill="#9c9c9c"/><rect x="14" y="13" width="1" height="2" fill="#a8a8a8"/></svg>
<div class="t" style="left:272px;top:207px;transform:scaleX(0.9949);transform-origin:0 0;color:#000">Shutdown: Clear virtual memory pagefile</div>
<div class="t" style="left:606px;top:207px;transform:scaleX(0.9421);transform-origin:0 0;color:#000">Disabled</div>
<svg style="position:absolute;left:254px;top:224px;" width="18" height="18" viewBox="0 0 18 18" shape-rendering="crispEdges"><rect x="2" y="1" width="10" height="1" fill="#a8a8a8"/><rect x="2" y="1" width="1" height="12" fill="#a8a8a8"/><rect x="3" y="2" width="9" height="11" fill="#fdfdfd"/><rect x="12" y="2" width="1" height="1" fill="#a8a8a8"/><rect x="13" y="3" width="1" height="1" fill="#a8a8a8"/><rect x="14" y="4" width="1" height="9" fill="#a8a8a8"/><rect x="11" y="2" width="1" height="3" fill="#c4c4c4"/><rect x="11" y="4" width="3" height="1" fill="#c4c4c4"/><rect x="12" y="3" width="1" height="1" fill="#f4f4f4"/><rect x="3" y="12" width="11" height="1" fill="#fdfdfd"/><rect x="4" y="3" width="1" height="4" fill="#9898bc"/><rect x="6" y="3" width="3" height="4" fill="#d4d4e4"/><rect x="6" y="4" width="1" height="2" fill="#9898bc"/><rect x="8" y="4" width="1" height="2" fill="#9898bc"/><rect x="7" y="3" width="1" height="1" fill="#9898bc"/><rect x="7" y="6" width="1" height="1" fill="#9898bc"/><rect x="4" y="8" width="3" height="4" fill="#d4d4e4"/><rect x="5" y="9" width="1" height="2" fill="#fdfdfd"/><rect x="4" y="9" width="1" height="2" fill="#9898bc"/><rect x="6" y="9" width="1" height="2" fill="#9898bc"/><rect x="5" y="8" width="1" height="1" fill="#9898bc"/><rect x="5" y="11" width="1" height="1" fill="#9898bc"/><rect x="8" y="8" width="1" height="4" fill="#9898bc"/><rect x="10" y="8" width="3" height="4" fill="#d4d4e4"/><rect x="11" y="9" width="1" height="2" fill="#fdfdfd"/><rect x="10" y="9" width="1" height="2" fill="#9898bc"/><rect x="12" y="9" width="1" height="2" fill="#9898bc"/><rect x="11" y="8" width="1" height="1" fill="#9898bc"/><rect x="11" y="11" width="1" height="1" fill="#9898bc"/><rect x="2" y="13" width="2" height="1" fill="#a0a0a0"/><rect x="3" y="14" width="5" height="1" fill="#9a9a9a"/><rect x="5" y="13" width="4" height="1" fill="#b0b0b0"/><rect x="4" y="15" width="3" height="1" fill="#c8c8c8"/><rect x="9" y="13" width="2" height="1" fill="#b4b4b4"/><rect x="10" y="14" width="3" height="1" fill="#a4a4a4"/><rect x="12" y="13" width="2" height="1" fill="#b8b8b8"/><rect x="13" y="14" width="1" height="2" fill="#9c9c9c"/><rect x="14" y="13" width="1" height="2" fill="#a8a8a8"/></svg>
<div class="t" style="left:272px;top:226px;transform:scaleX(0.9849);transform-origin:0 0;color:#000">System cryptography: Force strong key protection for user k...</div>
<div class="t" style="left:606px;top:226px;color:#000">Not Defined</div>
<svg style="position:absolute;left:254px;top:243px;" width="18" height="18" viewBox="0 0 18 18" shape-rendering="crispEdges"><rect x="2" y="1" width="10" height="1" fill="#a8a8a8"/><rect x="2" y="1" width="1" height="12" fill="#a8a8a8"/><rect x="3" y="2" width="9" height="11" fill="#fdfdfd"/><rect x="12" y="2" width="1" height="1" fill="#a8a8a8"/><rect x="13" y="3" width="1" height="1" fill="#a8a8a8"/><rect x="14" y="4" width="1" height="9" fill="#a8a8a8"/><rect x="11" y="2" width="1" height="3" fill="#c4c4c4"/><rect x="11" y="4" width="3" height="1" fill="#c4c4c4"/><rect x="12" y="3" width="1" height="1" fill="#f4f4f4"/><rect x="3" y="12" width="11" height="1" fill="#fdfdfd"/><rect x="4" y="3" width="1" height="4" fill="#9898bc"/><rect x="6" y="3" width="3" height="4" fill="#d4d4e4"/><rect x="6" y="4" width="1" height="2" fill="#9898bc"/><rect x="8" y="4" width="1" height="2" fill="#9898bc"/><rect x="7" y="3" width="1" height="1" fill="#9898bc"/><rect x="7" y="6" width="1" height="1" fill="#9898bc"/><rect x="4" y="8" width="3" height="4" fill="#d4d4e4"/><rect x="5" y="9" width="1" height="2" fill="#fdfdfd"/><rect x="4" y="9" width="1" height="2" fill="#9898bc"/><rect x="6" y="9" width="1" height="2" fill="#9898bc"/><rect x="5" y="8" width="1" height="1" fill="#9898bc"/><rect x="5" y="11" width="1" height="1" fill="#9898bc"/><rect x="8" y="8" width="1" height="4" fill="#9898bc"/><rect x="10" y="8" width="3" height="4" fill="#d4d4e4"/><rect x="11" y="9" width="1" height="2" fill="#fdfdfd"/><rect x="10" y="9" width="1" height="2" fill="#9898bc"/><rect x="12" y="9" width="1" height="2" fill="#9898bc"/><rect x="11" y="8" width="1" height="1" fill="#9898bc"/><rect x="11" y="11" width="1" height="1" fill="#9898bc"/><rect x="2" y="13" width="2" height="1" fill="#a0a0a0"/><rect x="3" y="14" width="5" height="1" fill="#9a9a9a"/><rect x="5" y="13" width="4" height="1" fill="#b0b0b0"/><rect x="4" y="15" width="3" height="1" fill="#c8c8c8"/><rect x="9" y="13" width="2" height="1" fill="#b4b4b4"/><rect x="10" y="14" width="3" height="1" fill="#a4a4a4"/><rect x="12" y="13" width="2" height="1" fill="#b8b8b8"/><rect x="13" y="14" width="1" height="2" fill="#9c9c9c"/><rect x="14" y="13" width="1" height="2" fill="#a8a8a8"/></svg>
<div class="t" style="left:272px;top:245px;transform:scaleX(0.9780);transform-origin:0 0;color:#000">System cryptography: Use FIPS compliant algorithms for en...</div>
<div class="t" style="left:606px;top:245px;transform:scaleX(0.9421);transform-origin:0 0;color:#000">Disabled</div>
<svg style="position:absolute;left:254px;top:262px;" width="18" height="18" viewBox="0 0 18 18" shape-rendering="crispEdges"><rect x="2" y="1" width="10" height="1" fill="#a8a8a8"/><rect x="2" y="1" width="1" height="12" fill="#a8a8a8"/><rect x="3" y="2" width="9" height="11" fill="#fdfdfd"/><rect x="12" y="2" width="1" height="1" fill="#a8a8a8"/><rect x="13" y="3" width="1" height="1" fill="#a8a8a8"/><rect x="14" y="4" width="1" height="9" fill="#a8a8a8"/><rect x="11" y="2" width="1" height="3" fill="#c4c4c4"/><rect x="11" y="4" width="3" height="1" fill="#c4c4c4"/><rect x="12" y="3" width="1" height="1" fill="#f4f4f4"/><rect x="3" y="12" width="11" height="1" fill="#fdfdfd"/><rect x="4" y="3" width="1" height="4" fill="#9898bc"/><rect x="6" y="3" width="3" height="4" fill="#d4d4e4"/><rect x="6" y="4" width="1" height="2" fill="#9898bc"/><rect x="8" y="4" width="1" height="2" fill="#9898bc"/><rect x="7" y="3" width="1" height="1" fill="#9898bc"/><rect x="7" y="6" width="1" height="1" fill="#9898bc"/><rect x="4" y="8" width="3" height="4" fill="#d4d4e4"/><rect x="5" y="9" width="1" height="2" fill="#fdfdfd"/><rect x="4" y="9" width="1" height="2" fill="#9898bc"/><rect x="6" y="9" width="1" height="2" fill="#9898bc"/><rect x="5" y="8" width="1" height="1" fill="#9898bc"/><rect x="5" y="11" width="1" height="1" fill="#9898bc"/><rect x="8" y="8" width="1" height="4" fill="#9898bc"/><rect x="10" y="8" width="3" height="4" fill="#d4d4e4"/><rect x="11" y="9" width="1" height="2" fill="#fdfdfd"/><rect x="10" y="9" width="1" height="2" fill="#9898bc"/><rect x="12" y="9" width="1" height="2" fill="#9898bc"/><rect x="11" y="8" width="1" height="1" fill="#9898bc"/><rect x="11" y="11" width="1" height="1" fill="#9898bc"/><rect x="2" y="13" width="2" height="1" fill="#a0a0a0"/><rect x="3" y="14" width="5" height="1" fill="#9a9a9a"/><rect x="5" y="13" width="4" height="1" fill="#b0b0b0"/><rect x="4" y="15" width="3" height="1" fill="#c8c8c8"/><rect x="9" y="13" width="2" height="1" fill="#b4b4b4"/><rect x="10" y="14" width="3" height="1" fill="#a4a4a4"/><rect x="12" y="13" width="2" height="1" fill="#b8b8b8"/><rect x="13" y="14" width="1" height="2" fill="#9c9c9c"/><rect x="14" y="13" width="1" height="2" fill="#a8a8a8"/></svg>
<div class="t" style="left:272px;top:264px;transform:scaleX(0.9790);transform-origin:0 0;color:#000">System objects: Require case insensitivity for non-Windows ...</div>
<div class="t" style="left:606px;top:264px;transform:scaleX(0.9286);transform-origin:0 0;color:#000">Enabled</div>
<svg style="position:absolute;left:254px;top:281px;" width="18" height="18" viewBox="0 0 18 18" shape-rendering="crispEdges"><rect x="2" y="1" width="10" height="1" fill="#a8a8a8"/><rect x="2" y="1" width="1" height="12" fill="#a8a8a8"/><rect x="3" y="2" width="9" height="11" fill="#fdfdfd"/><rect x="12" y="2" width="1" height="1" fill="#a8a8a8"/><rect x="13" y="3" width="1" height="1" fill="#a8a8a8"/><rect x="14" y="4" width="1" height="9" fill="#a8a8a8"/><rect x="11" y="2" width="1" height="3" fill="#c4c4c4"/><rect x="11" y="4" width="3" height="1" fill="#c4c4c4"/><rect x="12" y="3" width="1" height="1" fill="#f4f4f4"/><rect x="3" y="12" width="11" height="1" fill="#fdfdfd"/><rect x="4" y="3" width="1" height="4" fill="#9898bc"/><rect x="6" y="3" width="3" height="4" fill="#d4d4e4"/><rect x="6" y="4" width="1" height="2" fill="#9898bc"/><rect x="8" y="4" width="1" height="2" fill="#9898bc"/><rect x="7" y="3" width="1" height="1" fill="#9898bc"/><rect x="7" y="6" width="1" height="1" fill="#9898bc"/><rect x="4" y="8" width="3" height="4" fill="#d4d4e4"/><rect x="5" y="9" width="1" height="2" fill="#fdfdfd"/><rect x="4" y="9" width="1" height="2" fill="#9898bc"/><rect x="6" y="9" width="1" height="2" fill="#9898bc"/><rect x="5" y="8" width="1" height="1" fill="#9898bc"/><rect x="5" y="11" width="1" height="1" fill="#9898bc"/><rect x="8" y="8" width="1" height="4" fill="#9898bc"/><rect x="10" y="8" width="3" height="4" fill="#d4d4e4"/><rect x="11" y="9" width="1" height="2" fill="#fdfdfd"/><rect x="10" y="9" width="1" height="2" fill="#9898bc"/><rect x="12" y="9" width="1" height="2" fill="#9898bc"/><rect x="11" y="8" width="1" height="1" fill="#9898bc"/><rect x="11" y="11" width="1" height="1" fill="#9898bc"/><rect x="2" y="13" width="2" height="1" fill="#a0a0a0"/><rect x="3" y="14" width="5" height="1" fill="#9a9a9a"/><rect x="5" y="13" width="4" height="1" fill="#b0b0b0"/><rect x="4" y="15" width="3" height="1" fill="#c8c8c8"/><rect x="9" y="13" width="2" height="1" fill="#b4b4b4"/><rect x="10" y="14" width="3" height="1" fill="#a4a4a4"/><rect x="12" y="13" width="2" height="1" fill="#b8b8b8"/><rect x="13" y="14" width="1" height="2" fill="#9c9c9c"/><rect x="14" y="13" width="1" height="2" fill="#a8a8a8"/></svg>
<div class="t" style="left:272px;top:283px;transform:scaleX(0.9811);transform-origin:0 0;color:#000">System objects: Strengthen default permissions of internal s...</div>
<div class="t" style="left:606px;top:283px;transform:scaleX(0.9286);transform-origin:0 0;color:#000">Enabled</div>
<svg style="position:absolute;left:254px;top:300px;" width="18" height="18" viewBox="0 0 18 18" shape-rendering="crispEdges"><rect x="2" y="1" width="10" height="1" fill="#a8a8a8"/><rect x="2" y="1" width="1" height="12" fill="#a8a8a8"/><rect x="3" y="2" width="9" height="11" fill="#fdfdfd"/><rect x="12" y="2" width="1" height="1" fill="#a8a8a8"/><rect x="13" y="3" width="1" height="1" fill="#a8a8a8"/><rect x="14" y="4" width="1" height="9" fill="#a8a8a8"/><rect x="11" y="2" width="1" height="3" fill="#c4c4c4"/><rect x="11" y="4" width="3" height="1" fill="#c4c4c4"/><rect x="12" y="3" width="1" height="1" fill="#f4f4f4"/><rect x="3" y="12" width="11" height="1" fill="#fdfdfd"/><rect x="4" y="3" width="1" height="4" fill="#9898bc"/><rect x="6" y="3" width="3" height="4" fill="#d4d4e4"/><rect x="6" y="4" width="1" height="2" fill="#9898bc"/><rect x="8" y="4" width="1" height="2" fill="#9898bc"/><rect x="7" y="3" width="1" height="1" fill="#9898bc"/><rect x="7" y="6" width="1" height="1" fill="#9898bc"/><rect x="4" y="8" width="3" height="4" fill="#d4d4e4"/><rect x="5" y="9" width="1" height="2" fill="#fdfdfd"/><rect x="4" y="9" width="1" height="2" fill="#9898bc"/><rect x="6" y="9" width="1" height="2" fill="#9898bc"/><rect x="5" y="8" width="1" height="1" fill="#9898bc"/><rect x="5" y="11" width="1" height="1" fill="#9898bc"/><rect x="8" y="8" width="1" height="4" fill="#9898bc"/><rect x="10" y="8" width="3" height="4" fill="#d4d4e4"/><rect x="11" y="9" width="1" height="2" fill="#fdfdfd"/><rect x="10" y="9" width="1" height="2" fill="#9898bc"/><rect x="12" y="9" width="1" height="2" fill="#9898bc"/><rect x="11" y="8" width="1" height="1" fill="#9898bc"/><rect x="11" y="11" width="1" height="1" fill="#9898bc"/><rect x="2" y="13" width="2" height="1" fill="#a0a0a0"/><rect x="3" y="14" width="5" height="1" fill="#9a9a9a"/><rect x="5" y="13" width="4" height="1" fill="#b0b0b0"/><rect x="4" y="15" width="3" height="1" fill="#c8c8c8"/><rect x="9" y="13" width="2" height="1" fill="#b4b4b4"/><rect x="10" y="14" width="3" height="1" fill="#a4a4a4"/><rect x="12" y="13" width="2" height="1" fill="#b8b8b8"/><rect x="13" y="14" width="1" height="2" fill="#9c9c9c"/><rect x="14" y="13" width="1" height="2" fill="#a8a8a8"/></svg>
<div class="t" style="left:272px;top:302px;transform:scaleX(0.9697);transform-origin:0 0;color:#000">System settings: Optional subsystems</div>
<svg style="position:absolute;left:254px;top:319px;" width="18" height="18" viewBox="0 0 18 18" shape-rendering="crispEdges"><rect x="2" y="1" width="10" height="1" fill="#a8a8a8"/><rect x="2" y="1" width="1" height="12" fill="#a8a8a8"/><rect x="3" y="2" width="9" height="11" fill="#fdfdfd"/><rect x="12" y="2" width="1" height="1" fill="#a8a8a8"/><rect x="13" y="3" width="1" height="1" fill="#a8a8a8"/><rect x="14" y="4" width="1" height="9" fill="#a8a8a8"/><rect x="11" y="2" width="1" height="3" fill="#c4c4c4"/><rect x="11" y="4" width="3" height="1" fill="#c4c4c4"/><rect x="12" y="3" width="1" height="1" fill="#f4f4f4"/><rect x="3" y="12" width="11" height="1" fill="#fdfdfd"/><rect x="4" y="3" width="1" height="4" fill="#9898bc"/><rect x="6" y="3" width="3" height="4" fill="#d4d4e4"/><rect x="6" y="4" width="1" height="2" fill="#9898bc"/><rect x="8" y="4" width="1" height="2" fill="#9898bc"/><rect x="7" y="3" width="1" height="1" fill="#9898bc"/><rect x="7" y="6" width="1" height="1" fill="#9898bc"/><rect x="4" y="8" width="3" height="4" fill="#d4d4e4"/><rect x="5" y="9" width="1" height="2" fill="#fdfdfd"/><rect x="4" y="9" width="1" height="2" fill="#9898bc"/><rect x="6" y="9" width="1" height="2" fill="#9898bc"/><rect x="5" y="8" width="1" height="1" fill="#9898bc"/><rect x="5" y="11" width="1" height="1" fill="#9898bc"/><rect x="8" y="8" width="1" height="4" fill="#9898bc"/><rect x="10" y="8" width="3" height="4" fill="#d4d4e4"/><rect x="11" y="9" width="1" height="2" fill="#fdfdfd"/><rect x="10" y="9" width="1" height="2" fill="#9898bc"/><rect x="12" y="9" width="1" height="2" fill="#9898bc"/><rect x="11" y="8" width="1" height="1" fill="#9898bc"/><rect x="11" y="11" width="1" height="1" fill="#9898bc"/><rect x="2" y="13" width="2" height="1" fill="#a0a0a0"/><rect x="3" y="14" width="5" height="1" fill="#9a9a9a"/><rect x="5" y="13" width="4" height="1" fill="#b0b0b0"/><rect x="4" y="15" width="3" height="1" fill="#c8c8c8"/><rect x="9" y="13" width="2" height="1" fill="#b4b4b4"/><rect x="10" y="14" width="3" height="1" fill="#a4a4a4"/><rect x="12" y="13" width="2" height="1" fill="#b8b8b8"/><rect x="13" y="14" width="1" height="2" fill="#9c9c9c"/><rect x="14" y="13" width="1" height="2" fill="#a8a8a8"/></svg>
<div class="t" style="left:272px;top:321px;transform:scaleX(0.9569);transform-origin:0 0;color:#000">System settings: Use Certificate Rules on Windows Executabl...</div>
<div class="t" style="left:606px;top:321px;transform:scaleX(0.9421);transform-origin:0 0;color:#000">Disabled</div>
<svg style="position:absolute;left:254px;top:338px;" width="18" height="18" viewBox="0 0 18 18" shape-rendering="crispEdges"><rect x="2" y="1" width="10" height="1" fill="#a8a8a8"/><rect x="2" y="1" width="1" height="12" fill="#a8a8a8"/><rect x="3" y="2" width="9" height="11" fill="#fdfdfd"/><rect x="12" y="2" width="1" height="1" fill="#a8a8a8"/><rect x="13" y="3" width="1" height="1" fill="#a8a8a8"/><rect x="14" y="4" width="1" height="9" fill="#a8a8a8"/><rect x="11" y="2" width="1" height="3" fill="#c4c4c4"/><rect x="11" y="4" width="3" height="1" fill="#c4c4c4"/><rect x="12" y="3" width="1" height="1" fill="#f4f4f4"/><rect x="3" y="12" width="11" height="1" fill="#fdfdfd"/><rect x="4" y="3" width="1" height="4" fill="#9898bc"/><rect x="6" y="3" width="3" height="4" fill="#d4d4e4"/><rect x="6" y="4" width="1" height="2" fill="#9898bc"/><rect x="8" y="4" width="1" height="2" fill="#9898bc"/><rect x="7" y="3" width="1" height="1" fill="#9898bc"/><rect x="7" y="6" width="1" height="1" fill="#9898bc"/><rect x="4" y="8" width="3" height="4" fill="#d4d4e4"/><rect x="5" y="9" width="1" height="2" fill="#fdfdfd"/><rect x="4" y="9" width="1" height="2" fill="#9898bc"/><rect x="6" y="9" width="1" height="2" fill="#9898bc"/><rect x="5" y="8" width="1" height="1" fill="#9898bc"/><rect x="5" y="11" width="1" height="1" fill="#9898bc"/><rect x="8" y="8" width="1" height="4" fill="#9898bc"/><rect x="10" y="8" width="3" height="4" fill="#d4d4e4"/><rect x="11" y="9" width="1" height="2" fill="#fdfdfd"/><rect x="10" y="9" width="1" height="2" fill="#9898bc"/><rect x="12" y="9" width="1" height="2" fill="#9898bc"/><rect x="11" y="8" width="1" height="1" fill="#9898bc"/><rect x="11" y="11" width="1" height="1" fill="#9898bc"/><rect x="2" y="13" width="2" height="1" fill="#a0a0a0"/><rect x="3" y="14" width="5" height="1" fill="#9a9a9a"/><rect x="5" y="13" width="4" height="1" fill="#b0b0b0"/><rect x="4" y="15" width="3" height="1" fill="#c8c8c8"/><rect x="9" y="13" width="2" height="1" fill="#b4b4b4"/><rect x="10" y="14" width="3" height="1" fill="#a4a4a4"/><rect x="12" y="13" width="2" height="1" fill="#b8b8b8"/><rect x="13" y="14" width="1" height="2" fill="#9c9c9c"/><rect x="14" y="13" width="1" height="2" fill="#a8a8a8"/></svg>
<div class="t" style="left:272px;top:340px;transform:scaleX(1.0139);transform-origin:0 0;color:#000">User Account Control: Admin Approval Mode for the Built-i...</div>
<div class="t" style="left:606px;top:340px;color:#000">Not Defined</div>
<svg style="position:absolute;left:254px;top:357px;" width="18" height="18" viewBox="0 0 18 18" shape-rendering="crispEdges"><rect x="2" y="1" width="10" height="1" fill="#a8a8a8"/><rect x="2" y="1" width="1" height="12" fill="#a8a8a8"/><rect x="3" y="2" width="9" height="11" fill="#fdfdfd"/><rect x="12" y="2" width="1" height="1" fill="#a8a8a8"/><rect x="13" y="3" width="1" height="1" fill="#a8a8a8"/><rect x="14" y="4" width="1" height="9" fill="#a8a8a8"/><rect x="11" y="2" width="1" height="3" fill="#c4c4c4"/><rect x="11" y="4" width="3" height="1" fill="#c4c4c4"/><rect x="12" y="3" width="1" height="1" fill="#f4f4f4"/><rect x="3" y="12" width="11" height="1" fill="#fdfdfd"/><rect x="4" y="3" width="1" height="4" fill="#9898bc"/><rect x="6" y="3" width="3" height="4" fill="#d4d4e4"/><rect x="6" y="4" width="1" height="2" fill="#9898bc"/><rect x="8" y="4" width="1" height="2" fill="#9898bc"/><rect x="7" y="3" width="1" height="1" fill="#9898bc"/><rect x="7" y="6" width="1" height="1" fill="#9898bc"/><rect x="4" y="8" width="3" height="4" fill="#d4d4e4"/><rect x="5" y="9" width="1" height="2" fill="#fdfdfd"/><rect x="4" y="9" width="1" height="2" fill="#9898bc"/><rect x="6" y="9" width="1" height="2" fill="#9898bc"/><rect x="5" y="8" width="1" height="1" fill="#9898bc"/><rect x="5" y="11" width="1" height="1" fill="#9898bc"/><rect x="8" y="8" width="1" height="4" fill="#9898bc"/><rect x="10" y="8" width="3" height="4" fill="#d4d4e4"/><rect x="11" y="9" width="1" height="2" fill="#fdfdfd"/><rect x="10" y="9" width="1" height="2" fill="#9898bc"/><rect x="12" y="9" width="1" height="2" fill="#9898bc"/><rect x="11" y="8" width="1" height="1" fill="#9898bc"/><rect x="11" y="11" width="1" height="1" fill="#9898bc"/><rect x="2" y="13" width="2" height="1" fill="#a0a0a0"/><rect x="3" y="14" width="5" height="1" fill="#9a9a9a"/><rect x="5" y="13" width="4" height="1" fill="#b0b0b0"/><rect x="4" y="15" width="3" height="1" fill="#c8c8c8"/><rect x="9" y="13" width="2" height="1" fill="#b4b4b4"/><rect x="10" y="14" width="3" height="1" fill="#a4a4a4"/><rect x="12" y="13" width="2" height="1" fill="#b8b8b8"/><rect x="13" y="14" width="1" height="2" fill="#9c9c9c"/><rect x="14" y="13" width="1" height="2" fill="#a8a8a8"/></svg>
<div class="t" style="left:272px;top:359px;transform:scaleX(0.9941);transform-origin:0 0;color:#000">User Account Control: Allow UIAccess applications to prom...</div>
<div class="t" style="left:606px;top:359px;transform:scaleX(0.9421);transform-origin:0 0;color:#000">Disabled</div>
<svg style="position:absolute;left:254px;top:376px;" width="18" height="18" viewBox="0 0 18 18" shape-rendering="crispEdges"><rect x="2" y="1" width="10" height="1" fill="#a8a8a8"/><rect x="2" y="1" width="1" height="12" fill="#a8a8a8"/><rect x="3" y="2" width="9" height="11" fill="#fdfdfd"/><rect x="12" y="2" width="1" height="1" fill="#a8a8a8"/><rect x="13" y="3" width="1" height="1" fill="#a8a8a8"/><rect x="14" y="4" width="1" height="9" fill="#a8a8a8"/><rect x="11" y="2" width="1" height="3" fill="#c4c4c4"/><rect x="11" y="4" width="3" height="1" fill="#c4c4c4"/><rect x="12" y="3" width="1" height="1" fill="#f4f4f4"/><rect x="3" y="12" width="11" height="1" fill="#fdfdfd"/><rect x="4" y="3" width="1" height="4" fill="#9898bc"/><rect x="6" y="3" width="3" height="4" fill="#d4d4e4"/><rect x="6" y="4" width="1" height="2" fill="#9898bc"/><rect x="8" y="4" width="1" height="2" fill="#9898bc"/><rect x="7" y="3" width="1" height="1" fill="#9898bc"/><rect x="7" y="6" width="1" height="1" fill="#9898bc"/><rect x="4" y="8" width="3" height="4" fill="#d4d4e4"/><rect x="5" y="9" width="1" height="2" fill="#fdfdfd"/><rect x="4" y="9" width="1" height="2" fill="#9898bc"/><rect x="6" y="9" width="1" height="2" fill="#9898bc"/><rect x="5" y="8" width="1" height="1" fill="#9898bc"/><rect x="5" y="11" width="1" height="1" fill="#9898bc"/><rect x="8" y="8" width="1" height="4" fill="#9898bc"/><rect x="10" y="8" width="3" height="4" fill="#d4d4e4"/><rect x="11" y="9" width="1" height="2" fill="#fdfdfd"/><rect x="10" y="9" width="1" height="2" fill="#9898bc"/><rect x="12" y="9" width="1" height="2" fill="#9898bc"/><rect x="11" y="8" width="1" height="1" fill="#9898bc"/><rect x="11" y="11" width="1" height="1" fill="#9898bc"/><rect x="2" y="13" width="2" height="1" fill="#a0a0a0"/><rect x="3" y="14" width="5" height="1" fill="#9a9a9a"/><rect x="5" y="13" width="4" height="1" fill="#b0b0b0"/><rect x="4" y="15" width="3" height="1" fill="#c8c8c8"/><rect x="9" y="13" width="2" height="1" fill="#b4b4b4"/><rect x="10" y="14" width="3" height="1" fill="#a4a4a4"/><rect x="12" y="13" width="2" height="1" fill="#b8b8b8"/><rect x="13" y="14" width="1" height="2" fill="#9c9c9c"/><rect x="14" y="13" width="1" height="2" fill="#a8a8a8"/></svg>
<div class="t" style="left:272px;top:378px;color:#000">User Account Control: Behavior of the elevation prompt for ...</div>
<div class="t" style="left:606px;top:378px;color:#000">Prompt for consent for ...</div>
<svg style="position:absolute;left:254px;top:395px;" width="18" height="18" viewBox="0 0 18 18" shape-rendering="crispEdges"><rect x="2" y="1" width="10" height="1" fill="#a8a8a8"/><rect x="2" y="1" width="1" height="12" fill="#a8a8a8"/><rect x="3" y="2" width="9" height="11" fill="#fdfdfd"/><rect x="12" y="2" width="1" height="1" fill="#a8a8a8"/><rect x="13" y="3" width="1" height="1" fill="#a8a8a8"/><rect x="14" y="4" width="1" height="9" fill="#a8a8a8"/><rect x="11" y="2" width="1" height="3" fill="#c4c4c4"/><rect x="11" y="4" width="3" height="1" fill="#c4c4c4"/><rect x="12" y="3" width="1" height="1" fill="#f4f4f4"/><rect x="3" y="12" width="11" height="1" fill="#fdfdfd"/><rect x="4" y="3" width="1" height="4" fill="#9898bc"/><rect x="6" y="3" width="3" height="4" fill="#d4d4e4"/><rect x="6" y="4" width="1" height="2" fill="#9898bc"/><rect x="8" y="4" width="1" height="2" fill="#9898bc"/><rect x="7" y="3" width="1" height="1" fill="#9898bc"/><rect x="7" y="6" width="1" height="1" fill="#9898bc"/><rect x="4" y="8" width="3" height="4" fill="#d4d4e4"/><rect x="5" y="9" width="1" height="2" fill="#fdfdfd"/><rect x="4" y="9" width="1" height="2" fill="#9898bc"/><rect x="6" y="9" width="1" height="2" fill="#9898bc"/><rect x="5" y="8" width="1" height="1" fill="#9898bc"/><rect x="5" y="11" width="1" height="1" fill="#9898bc"/><rect x="8" y="8" width="1" height="4" fill="#9898bc"/><rect x="10" y="8" width="3" height="4" fill="#d4d4e4"/><rect x="11" y="9" width="1" height="2" fill="#fdfdfd"/><rect x="10" y="9" width="1" height="2" fill="#9898bc"/><rect x="12" y="9" width="1" height="2" fill="#9898bc"/><rect x="11" y="8" width="1" height="1" fill="#9898bc"/><rect x="11" y="11" width="1" height="1" fill="#9898bc"/><rect x="2" y="13" width="2" height="1" fill="#a0a0a0"/><rect x="3" y="14" width="5" height="1" fill="#9a9a9a"/><rect x="5" y="13" width="4" height="1" fill="#b0b0b0"/><rect x="4" y="15" width="3" height="1" fill="#c8c8c8"/><rect x="9" y="13" width="2" height="1" fill="#b4b4b4"/><rect x="10" y="14" width="3" height="1" fill="#a4a4a4"/><rect x="12" y="13" width="2" height="1" fill="#b8b8b8"/><rect x="13" y="14" width="1" height="2" fill="#9c9c9c"/><rect x="14" y="13" width="1" height="2" fill="#a8a8a8"/></svg>
<div class="t" style="left:272px;top:397px;color:#000">User Account Control: Behavior of the elevation prompt for ...</div>
<div class="t" style="left:606px;top:397px;color:#000">Prompt for credentials</div>
<svg style="position:absolute;left:254px;top:414px;" width="18" height="18" viewBox="0 0 18 18" shape-rendering="crispEdges"><rect x="2" y="1" width="10" height="1" fill="#a8a8a8"/><rect x="2" y="1" width="1" height="12" fill="#a8a8a8"/><rect x="3" y="2" width="9" height="11" fill="#fdfdfd"/><rect x="12" y="2" width="1" height="1" fill="#a8a8a8"/><rect x="13" y="3" width="1" height="1" fill="#a8a8a8"/><rect x="14" y="4" width="1" height="9" fill="#a8a8a8"/><rect x="11" y="2" width="1" height="3" fill="#c4c4c4"/><rect x="11" y="4" width="3" height="1" fill="#c4c4c4"/><rect x="12" y="3" width="1" height="1" fill="#f4f4f4"/><rect x="3" y="12" width="11" height="1" fill="#fdfdfd"/><rect x="4" y="3" width="1" height="4" fill="#9898bc"/><rect x="6" y="3" width="3" height="4" fill="#d4d4e4"/><rect x="6" y="4" width="1" height="2" fill="#9898bc"/><rect x="8" y="4" width="1" height="2" fill="#9898bc"/><rect x="7" y="3" width="1" height="1" fill="#9898bc"/><rect x="7" y="6" width="1" height="1" fill="#9898bc"/><rect x="4" y="8" width="3" height="4" fill="#d4d4e4"/><rect x="5" y="9" width="1" height="2" fill="#fdfdfd"/><rect x="4" y="9" width="1" height="2" fill="#9898bc"/><rect x="6" y="9" width="1" height="2" fill="#9898bc"/><rect x="5" y="8" width="1" height="1" fill="#9898bc"/><rect x="5" y="11" width="1" height="1" fill="#9898bc"/><rect x="8" y="8" width="1" height="4" fill="#9898bc"/><rect x="10" y="8" width="3" height="4" fill="#d4d4e4"/><rect x="11" y="9" width="1" height="2" fill="#fdfdfd"/><rect x="10" y="9" width="1" height="2" fill="#9898bc"/><rect x="12" y="9" width="1" height="2" fill="#9898bc"/><rect x="11" y="8" width="1" height="1" fill="#9898bc"/><rect x="11" y="11" width="1" height="1" fill="#9898bc"/><rect x="2" y="13" width="2" height="1" fill="#a0a0a0"/><rect x="3" y="14" width="5" height="1" fill="#9a9a9a"/><rect x="5" y="13" width="4" height="1" fill="#b0b0b0"/><rect x="4" y="15" width="3" height="1" fill="#c8c8c8"/><rect x="9" y="13" width="2" height="1" fill="#b4b4b4"/><rect x="10" y="14" width="3" height="1" fill="#a4a4a4"/><rect x="12" y="13" width="2" height="1" fill="#b8b8b8"/><rect x="13" y="14" width="1" height="2" fill="#9c9c9c"/><rect x="14" y="13" width="1" height="2" fill="#a8a8a8"/></svg>
<div class="t" style="left:272px;top:416px;transform:scaleX(0.9949);transform-origin:0 0;color:#000">User Account Control: Detect application installations and p...</div>
<div class="t" style="left:606px;top:416px;transform:scaleX(0.9286);transform-origin:0 0;color:#000">Enabled</div>
<svg style="position:absolute;left:254px;top:433px;" width="18" height="18" viewBox="0 0 18 18" shape-rendering="crispEdges"><rect x="2" y="1" width="10" height="1" fill="#a8a8a8"/><rect x="2" y="1" width="1" height="12" fill="#a8a8a8"/><rect x="3" y="2" width="9" height="11" fill="#fdfdfd"/><rect x="12" y="2" width="1" height="1" fill="#a8a8a8"/><rect x="13" y="3" width="1" height="1" fill="#a8a8a8"/><rect x="14" y="4" width="1" height="9" fill="#a8a8a8"/><rect x="11" y="2" width="1" height="3" fill="#c4c4c4"/><rect x="11" y="4" width="3" height="1" fill="#c4c4c4"/><rect x="12" y="3" width="1" height="1" fill="#f4f4f4"/><rect x="3" y="12" width="11" height="1" fill="#fdfdfd"/><rect x="4" y="3" width="1" height="4" fill="#9898bc"/><rect x="6" y="3" width="3" height="4" fill="#d4d4e4"/><rect x="6" y="4" width="1" height="2" fill="#9898bc"/><rect x="8" y="4" width="1" height="2" fill="#9898bc"/><rect x="7" y="3" width="1" height="1" fill="#9898bc"/><rect x="7" y="6" width="1" height="1" fill="#9898bc"/><rect x="4" y="8" width="3" height="4" fill="#d4d4e4"/><rect x="5" y="9" width="1" height="2" fill="#fdfdfd"/><rect x="4" y="9" width="1" height="2" fill="#9898bc"/><rect x="6" y="9" width="1" height="2" fill="#9898bc"/><rect x="5" y="8" width="1" height="1" fill="#9898bc"/><rect x="5" y="11" width="1" height="1" fill="#9898bc"/><rect x="8" y="8" width="1" height="4" fill="#9898bc"/><rect x="10" y="8" width="3" height="4" fill="#d4d4e4"/><rect x="11" y="9" width="1" height="2" fill="#fdfdfd"/><rect x="10" y="9" width="1" height="2" fill="#9898bc"/><rect x="12" y="9" width="1" height="2" fill="#9898bc"/><rect x="11" y="8" width="1" height="1" fill="#9898bc"/><rect x="11" y="11" width="1" height="1" fill="#9898bc"/><rect x="2" y="13" width="2" height="1" fill="#a0a0a0"/><rect x="3" y="14" width="5" height="1" fill="#9a9a9a"/><rect x="5" y="13" width="4" height="1" fill="#b0b0b0"/><rect x="4" y="15" width="3" height="1" fill="#c8c8c8"/><rect x="9" y="13" width="2" height="1" fill="#b4b4b4"/><rect x="10" y="14" width="3" height="1" fill="#a4a4a4"/><rect x="12" y="13" width="2" height="1" fill="#b8b8b8"/><rect x="13" y="14" width="1" height="2" fill="#9c9c9c"/><rect x="14" y="13" width="1" height="2" fill="#a8a8a8"/></svg>
<div class="t" style="left:272px;top:435px;transform:scaleX(0.9721);transform-origin:0 0;color:#000">User Account Control: Only elevate executables that are sign...</div>
<div class="t" style="left:606px;top:435px;transform:scaleX(0.9421);transform-origin:0 0;color:#000">Disabled</div>
<svg style="position:absolute;left:254px;top:452px;" width="18" height="18" viewBox="0 0 18 18" shape-rendering="crispEdges"><rect x="2" y="1" width="10" height="1" fill="#a8a8a8"/><rect x="2" y="1" width="1" height="12" fill="#a8a8a8"/><rect x="3" y="2" width="9" height="11" fill="#fdfdfd"/><rect x="12" y="2" width="1" height="1" fill="#a8a8a8"/><rect x="13" y="3" width="1" height="1" fill="#a8a8a8"/><rect x="14" y="4" width="1" height="9" fill="#a8a8a8"/><rect x="11" y="2" width="1" height="3" fill="#c4c4c4"/><rect x="11" y="4" width="3" height="1" fill="#c4c4c4"/><rect x="12" y="3" width="1" height="1" fill="#f4f4f4"/><rect x="3" y="12" width="11" height="1" fill="#fdfdfd"/><rect x="4" y="3" width="1" height="4" fill="#9898bc"/><rect x="6" y="3" width="3" height="4" fill="#d4d4e4"/><rect x="6" y="4" width="1" height="2" fill="#9898bc"/><rect x="8" y="4" width="1" height="2" fill="#9898bc"/><rect x="7" y="3" width="1" height="1" fill="#9898bc"/><rect x="7" y="6" width="1" height="1" fill="#9898bc"/><rect x="4" y="8" width="3" height="4" fill="#d4d4e4"/><rect x="5" y="9" width="1" height="2" fill="#fdfdfd"/><rect x="4" y="9" width="1" height="2" fill="#9898bc"/><rect x="6" y="9" width="1" height="2" fill="#9898bc"/><rect x="5" y="8" width="1" height="1" fill="#9898bc"/><rect x="5" y="11" width="1" height="1" fill="#9898bc"/><rect x="8" y="8" width="1" height="4" fill="#9898bc"/><rect x="10" y="8" width="3" height="4" fill="#d4d4e4"/><rect x="11" y="9" width="1" height="2" fill="#fdfdfd"/><rect x="10" y="9" width="1" height="2" fill="#9898bc"/><rect x="12" y="9" width="1" height="2" fill="#9898bc"/><rect x="11" y="8" width="1" height="1" fill="#9898bc"/><rect x="11" y="11" width="1" height="1" fill="#9898bc"/><rect x="2" y="13" width="2" height="1" fill="#a0a0a0"/><rect x="3" y="14" width="5" height="1" fill="#9a9a9a"/><rect x="5" y="13" width="4" height="1" fill="#b0b0b0"/><rect x="4" y="15" width="3" height="1" fill="#c8c8c8"/><rect x="9" y="13" width="2" height="1" fill="#b4b4b4"/><rect x="10" y="14" width="3" height="1" fill="#a4a4a4"/><rect x="12" y="13" width="2" height="1" fill="#b8b8b8"/><rect x="13" y="14" width="1" height="2" fill="#9c9c9c"/><rect x="14" y="13" width="1" height="2" fill="#a8a8a8"/></svg>
<div class="t" style="left:272px;top:454px;transform:scaleX(0.9785);transform-origin:0 0;color:#000">User Account Control: Only elevate UIAccess applications th...</div>
<div class="t" style="left:606px;top:454px;transform:scaleX(0.9286);transform-origin:0 0;color:#000">Enabled</div>
<svg style="position:absolute;left:254px;top:471px;" width="18" height="18" viewBox="0 0 18 18" shape-rendering="crispEdges"><rect x="2" y="1" width="10" height="1" fill="#a8a8a8"/><rect x="2" y="1" width="1" height="12" fill="#a8a8a8"/><rect x="3" y="2" width="9" height="11" fill="#fdfdfd"/><rect x="12" y="2" width="1" height="1" fill="#a8a8a8"/><rect x="13" y="3" width="1" height="1" fill="#a8a8a8"/><rect x="14" y="4" width="1" height="9" fill="#a8a8a8"/><rect x="11" y="2" width="1" height="3" fill="#c4c4c4"/><rect x="11" y="4" width="3" height="1" fill="#c4c4c4"/><rect x="12" y="3" width="1" height="1" fill="#f4f4f4"/><rect x="3" y="12" width="11" height="1" fill="#fdfdfd"/><rect x="4" y="3" width="1" height="4" fill="#9898bc"/><rect x="6" y="3" width="3" height="4" fill="#d4d4e4"/><rect x="6" y="4" width="1" height="2" fill="#9898bc"/><rect x="8" y="4" width="1" height="2" fill="#9898bc"/><rect x="7" y="3" width="1" height="1" fill="#9898bc"/><rect x="7" y="6" width="1" height="1" fill="#9898bc"/><rect x="4" y="8" width="3" height="4" fill="#d4d4e4"/><rect x="5" y="9" width="1" height="2" fill="#fdfdfd"/><rect x="4" y="9" width="1" height="2" fill="#9898bc"/><rect x="6" y="9" width="1" height="2" fill="#9898bc"/><rect x="5" y="8" width="1" height="1" fill="#9898bc"/><rect x="5" y="11" width="1" height="1" fill="#9898bc"/><rect x="8" y="8" width="1" height="4" fill="#9898bc"/><rect x="10" y="8" width="3" height="4" fill="#d4d4e4"/><rect x="11" y="9" width="1" height="2" fill="#fdfdfd"/><rect x="10" y="9" width="1" height="2" fill="#9898bc"/><rect x="12" y="9" width="1" height="2" fill="#9898bc"/><rect x="11" y="8" width="1" height="1" fill="#9898bc"/><rect x="11" y="11" width="1" height="1" fill="#9898bc"/><rect x="2" y="13" width="2" height="1" fill="#a0a0a0"/><rect x="3" y="14" width="5" height="1" fill="#9a9a9a"/><rect x="5" y="13" width="4" height="1" fill="#b0b0b0"/><rect x="4" y="15" width="3" height="1" fill="#c8c8c8"/><rect x="9" y="13" width="2" height="1" fill="#b4b4b4"/><rect x="10" y="14" width="3" height="1" fill="#a4a4a4"/><rect x="12" y="13" width="2" height="1" fill="#b8b8b8"/><rect x="13" y="14" width="1" height="2" fill="#9c9c9c"/><rect x="14" y="13" width="1" height="2" fill="#a8a8a8"/></svg>
<div class="t" style="left:272px;top:473px;color:#000">User Account Control: Run all administrators in Admin Appr...</div>
<div class="t" style="left:606px;top:473px;transform:scaleX(0.9286);transform-origin:0 0;color:#000">Enabled</div>
<div class="a" style="left:270px;top:489px;width:480px;height:19px;background:#0078d7"></div>
<svg style="position:absolute;left:254px;top:490px;" width="18" height="18" viewBox="0 0 18 18" shape-rendering="crispEdges"><rect x="2" y="1" width="10" height="1" fill="#a8a8a8"/><rect x="2" y="1" width="1" height="12" fill="#a8a8a8"/><rect x="3" y="2" width="9" height="11" fill="#fdfdfd"/><rect x="12" y="2" width="1" height="1" fill="#a8a8a8"/><rect x="13" y="3" width="1" height="1" fill="#a8a8a8"/><rect x="14" y="4" width="1" height="9" fill="#a8a8a8"/><rect x="11" y="2" width="1" height="3" fill="#c4c4c4"/><rect x="11" y="4" width="3" height="1" fill="#c4c4c4"/><rect x="12" y="3" width="1" height="1" fill="#f4f4f4"/><rect x="3" y="12" width="11" height="1" fill="#fdfdfd"/><rect x="4" y="3" width="1" height="4" fill="#9898bc"/><rect x="6" y="3" width="3" height="4" fill="#d4d4e4"/><rect x="6" y="4" width="1" height="2" fill="#9898bc"/><rect x="8" y="4" width="1" height="2" fill="#9898bc"/><rect x="7" y="3" width="1" height="1" fill="#9898bc"/><rect x="7" y="6" width="1" height="1" fill="#9898bc"/><rect x="4" y="8" width="3" height="4" fill="#d4d4e4"/><rect x="5" y="9" width="1" height="2" fill="#fdfdfd"/><rect x="4" y="9" width="1" height="2" fill="#9898bc"/><rect x="6" y="9" width="1" height="2" fill="#9898bc"/><rect x="5" y="8" width="1" height="1" fill="#9898bc"/><rect x="5" y="11" width="1" height="1" fill="#9898bc"/><rect x="8" y="8" width="1" height="4" fill="#9898bc"/><rect x="10" y="8" width="3" height="4" fill="#d4d4e4"/><rect x="11" y="9" width="1" height="2" fill="#fdfdfd"/><rect x="10" y="9" width="1" height="2" fill="#9898bc"/><rect x="12" y="9" width="1" height="2" fill="#9898bc"/><rect x="11" y="8" width="1" height="1" fill="#9898bc"/><rect x="11" y="11" width="1" height="1" fill="#9898bc"/><rect x="2" y="13" width="2" height="1" fill="#a0a0a0"/><rect x="3" y="14" width="5" height="1" fill="#9a9a9a"/><rect x="5" y="13" width="4" height="1" fill="#b0b0b0"/><rect x="4" y="15" width="3" height="1" fill="#c8c8c8"/><rect x="9" y="13" width="2" height="1" fill="#b4b4b4"/><rect x="10" y="14" width="3" height="1" fill="#a4a4a4"/><rect x="12" y="13" width="2" height="1" fill="#b8b8b8"/><rect x="13" y="14" width="1" height="2" fill="#9c9c9c"/><rect x="14" y="13" width="1" height="2" fill="#a8a8a8"/></svg>
<svg class="a" style="left:254px;top:490px" width="18" height="18" shape-rendering="crispEdges"><defs><pattern id="chk" width="2" height="2" patternUnits="userSpaceOnUse"><rect width="1" height="1" fill="#0078d7"/><rect x="1" y="1" width="1" height="1" fill="#0078d7"/></pattern></defs><path d="M2 1 H12 L15 4 V15 L2 14 Z" fill="url(#chk)"/></svg>
<div class="t" style="left:272px;top:492px;transform:scaleX(0.9871);transform-origin:0 0;color:#fff">User Account Control: Switch to the secure desktop when pr...</div>
<div class="t" style="left:606px;top:492px;transform:scaleX(0.9421);transform-origin:0 0;color:#fff">Disabled</div>
<svg style="position:absolute;left:254px;top:509px;" width="18" height="18" viewBox="0 0 18 18" shape-rendering="crispEdges"><rect x="2" y="1" width="10" height="1" fill="#a8a8a8"/><rect x="2" y="1" width="1" height="12" fill="#a8a8a8"/><rect x="3" y="2" width="9" height="11" fill="#fdfdfd"/><rect x="12" y="2" width="1" height="1" fill="#a8a8a8"/><rect x="13" y="3" width="1" height="1" fill="#a8a8a8"/><rect x="14" y="4" width="1" height="9" fill="#a8a8a8"/><rect x="11" y="2" width="1" height="3" fill="#c4c4c4"/><rect x="11" y="4" width="3" height="1" fill="#c4c4c4"/><rect x="12" y="3" width="1" height="1" fill="#f4f4f4"/><rect x="3" y="12" width="11" height="1" fill="#fdfdfd"/><rect x="4" y="3" width="1" height="4" fill="#9898bc"/><rect x="6" y="3" width="3" height="4" fill="#d4d4e4"/><rect x="6" y="4" width="1" height="2" fill="#9898bc"/><rect x="8" y="4" width="1" height="2" fill="#9898bc"/><rect x="7" y="3" width="1" height="1" fill="#9898bc"/><rect x="7" y="6" width="1" height="1" fill="#9898bc"/><rect x="4" y="8" width="3" height="4" fill="#d4d4e4"/><rect x="5" y="9" width="1" height="2" fill="#fdfdfd"/><rect x="4" y="9" width="1" height="2" fill="#9898bc"/><rect x="6" y="9" width="1" height="2" fill="#9898bc"/><rect x="5" y="8" width="1" height="1" fill="#9898bc"/><rect x="5" y="11" width="1" height="1" fill="#9898bc"/><rect x="8" y="8" width="1" height="4" fill="#9898bc"/><rect x="10" y="8" width="3" height="4" fill="#d4d4e4"/><rect x="11" y="9" width="1" height="2" fill="#fdfdfd"/><rect x="10" y="9" width="1" height="2" fill="#9898bc"/><rect x="12" y="9" width="1" height="2" fill="#9898bc"/><rect x="11" y="8" width="1" height="1" fill="#9898bc"/><rect x="11" y="11" width="1" height="1" fill="#9898bc"/><rect x="2" y="13" width="2" height="1" fill="#a0a0a0"/><rect x="3" y="14" width="5" height="1" fill="#9a9a9a"/><rect x="5" y="13" width="4" height="1" fill="#b0b0b0"/><rect x="4" y="15" width="3" height="1" fill="#c8c8c8"/><rect x="9" y="13" width="2" height="1" fill="#b4b4b4"/><rect x="10" y="14" width="3" height="1" fill="#a4a4a4"/><rect x="12" y="13" width="2" height="1" fill="#b8b8b8"/><rect x="13" y="14" width="1" height="2" fill="#9c9c9c"/><rect x="14" y="13" width="1" height="2" fill="#a8a8a8"/></svg>
<div class="t" style="left:272px;top:511px;transform:scaleX(0.9878);transform-origin:0 0;color:#000">User Account Control: Virtualize file and registry write failure...</div>
<div class="t" style="left:606px;top:511px;transform:scaleX(0.9286);transform-origin:0 0;color:#000">Enabled</div>
<div class="a" style="left:767px;top:85px;width:16px;height:454px;background:#f0f0f0"></div>
<div class="a" style="left:767px;top:427px;width:15px;height:95px;background:#cdcdcd"></div>
<svg style="position:absolute;left:770px;top:90px;" width="9" height="8" viewBox="0 0 9 8" shape-rendering="crispEdges"><path d="M1 6 L4.5 2.4 L8 6" fill="none" stroke="#606060" stroke-width="2" shape-rendering="geometricPrecision"/></svg>
<svg style="position:absolute;left:770px;top:527px;" width="9" height="8" viewBox="0 0 9 8" shape-rendering="crispEdges"><path d="M1 1.8 L4.5 5.4 L8 1.8" fill="none" stroke="#606060" stroke-width="2" shape-rendering="geometricPrecision"/></svg>
<div class="a" style="left:3px;top:523px;width:240px;height:16px;background:#f0f0f0"></div>
<div class="a" style="left:20px;top:523px;width:187px;height:15px;background:#cdcdcd"></div>
<svg style="position:absolute;left:7px;top:526px;" width="8" height="9" viewBox="0 0 8 9" shape-rendering="crispEdges"><path d="M6 1.3 L2.6 4.5 L6 7.7" fill="none" stroke="#606060" stroke-width="2" shape-rendering="geometricPrecision"/></svg>
<svg style="position:absolute;left:232px;top:526px;" width="8" height="9" viewBox="0 0 8 9" shape-rendering="crispEdges"><path d="M1 1.3 L4.4 4.5 L1 7.7" fill="none" stroke="#606060" stroke-width="2" shape-rendering="geometricPrecision"/></svg>
<svg style="position:absolute;left:5px;top:58px;" width="18" height="17" viewBox="0 0 18 17" shape-rendering="crispEdges"><defs><linearGradient id="bl" x1="0" y1="0" x2="0" y2="1"><stop offset="0" stop-color="#8ad8ff"/><stop offset="0.55" stop-color="#34a8f0"/><stop offset="1" stop-color="#1a7fd0"/></linearGradient></defs><path d="M1 8.5 L8.5 1.5 V5.5 H16.5 V11.5 H8.5 V15.5 Z" fill="url(#bl)" stroke="#2c7cc4" stroke-width="1" stroke-linejoin="round" shape-rendering="geometricPrecision"/></svg>
<svg style="position:absolute;left:28px;top:58px;" width="18" height="17" viewBox="0 0 18 17" shape-rendering="crispEdges"><defs><linearGradient id="gr" x1="0" y1="0" x2="0" y2="1"><stop offset="0" stop-color="#b4b4b4"/><stop offset="0.55" stop-color="#8a8a8a"/><stop offset="1" stop-color="#6a6a6a"/></linearGradient></defs><path d="M17 8.5 L9.5 1.5 V5.5 H1.5 V11.5 H9.5 V15.5 Z" fill="url(#gr)" stroke="#5c5c5c" stroke-width="1" stroke-linejoin="round" shape-rendering="geometricPrecision"/></svg>
<div class="a" style="left:51px;top:57px;width:1px;height:18px;background:#9a9a9a"></div>
<svg style="position:absolute;left:58px;top:56px;" width="20" height="20" viewBox="0 0 20 20" shape-rendering="crispEdges"><rect x="3" y="6" width="14" height="11" fill="#d6b468"/><rect x="4" y="7" width="12" height="4" fill="#fae4a4"/><rect x="4" y="11" width="12" height="5" fill="#f7da8c"/><rect x="4" y="7" width="1" height="9" fill="#fdf0c8"/><rect x="3" y="16" width="14" height="1" fill="#c8a050"/><rect x="10" y="5" width="7" height="3" fill="#d6b468"/><rect x="11" y="6" width="5" height="1" fill="#fff4d4"/><rect x="13" y="6" width="2" height="1" fill="#3a8fe0"/><rect x="10" y="8" width="6" height="1" fill="#e8c878"/><path d="M5.3 13.8 C7.8 12 8.8 10.5 9 7" fill="none" stroke="#40cc40" stroke-width="2.4" shape-rendering="geometricPrecision"/><path d="M5.8 8.2 L8.8 3.4 L12.6 7.4 Z" fill="#4cd64c" shape-rendering="geometricPrecision"/><path d="M8.5 6 L9 4.5" stroke="#9cf09c" stroke-width="1" shape-rendering="geometricPrecision"/></svg>
<div class="a" style="left:80px;top:55px;width:21px;height:19px;border:1px solid #99d1ff;background:#cce8ff"></div>
<svg style="position:absolute;left:80px;top:55px;" width="24" height="22" viewBox="0 0 24 22" shape-rendering="crispEdges"><rect x="4" y="6" width="16" height="13" fill="#6e7680"/><rect x="5" y="7" width="14" height="11" fill="#ffffff"/><rect x="5" y="7" width="10" height="1" fill="#d8dde2"/><rect x="16" y="7" width="1" height="1" fill="#6e7680"/><rect x="18" y="7" width="1" height="1" fill="#6e7680"/><rect x="5" y="8" width="14" height="1" fill="#6e7680"/><rect x="5" y="9" width="14" height="1" fill="#d8dde2"/><rect x="5" y="10" width="14" height="1" fill="#6e7680"/><rect x="9" y="11" width="1" height="7" fill="#6e7680"/><rect x="10" y="11" width="9" height="7" fill="#f2f2f2"/><rect x="6" y="12" width="2" height="1" fill="#3c7ed0"/><rect x="6" y="14" width="2" height="1" fill="#3c7ed0"/><rect x="6" y="16" width="2" height="1" fill="#3c7ed0"/><path d="M11.5 14.5 L14.5 11.8 V17.2 Z" fill="#38b838" shape-rendering="geometricPrecision"/></svg>
<div class="a" style="left:105px;top:57px;width:1px;height:18px;background:#9a9a9a"></div>
<svg style="position:absolute;left:114px;top:58px;" width="16" height="16" viewBox="0 0 16 16" shape-rendering="crispEdges"><defs><linearGradient id="xg" x1="0" y1="0" x2="0" y2="1"><stop offset="0" stop-color="#6a6a6a"/><stop offset="1" stop-color="#2e2e2e"/></linearGradient></defs><path d="M2.3 2.3 L13.7 13.7 M13.7 2.3 L2.3 13.7" stroke="url(#xg)" stroke-width="3.8" stroke-linecap="round" shape-rendering="geometricPrecision"/></svg>
<svg style="position:absolute;left:136px;top:57px;" width="18" height="18" viewBox="0 0 18 18" shape-rendering="crispEdges"><rect x="2" y="1" width="13" height="1" fill="#6c7079"/><rect x="1" y="2" width="1" height="14" fill="#6c7079"/><rect x="15" y="2" width="1" height="14" fill="#6c7079"/><rect x="2" y="16" width="13" height="1" fill="#6c7079"/><rect x="2" y="2" width="13" height="14" fill="#ffffff"/><rect x="2" y="2" width="13" height="1" fill="#e4e8ec"/><rect x="14" y="2" width="1" height="1" fill="#3858a8"/><rect x="4" y="5" width="10" height="9" fill="#9aa3ad"/><rect x="5" y="6" width="8" height="7" fill="#ffffff"/><rect x="7" y="5" width="6" height="2" fill="#9aa3ad"/><rect x="8" y="6" width="2" height="1" fill="#e6eaee"/><rect x="11" y="6" width="2" height="1" fill="#e6eaee"/><rect x="5" y="7" width="8" height="1" fill="#9aa3ad"/><rect x="6" y="9" width="1" height="1" fill="#18a8f8"/><rect x="8" y="9" width="4" height="1" fill="#a0a6ae"/><rect x="6" y="11" width="1" height="1" fill="#a0a6ae"/><rect x="8" y="11" width="4" height="1" fill="#a0a6ae"/><rect x="7" y="15" width="3" height="1" fill="#18b0f8"/><rect x="11" y="15" width="3" height="1" fill="#c8c8c8"/></svg>
<svg style="position:absolute;left:158px;top:56px;" width="20" height="20" viewBox="0 0 20 20" shape-rendering="crispEdges"><rect x="2" y="2" width="9" height="1" fill="#8c8c8c"/><rect x="2" y="2" width="1" height="15" fill="#8c8c8c"/><rect x="2" y="17" width="13" height="1" fill="#8c8c8c"/><rect x="14" y="6" width="1" height="11" fill="#8c8c8c"/><rect x="11" y="2" width="1" height="1" fill="#8c8c8c"/><rect x="12" y="3" width="1" height="1" fill="#8c8c8c"/><rect x="13" y="4" width="1" height="1" fill="#8c8c8c"/><rect x="3" y="3" width="8" height="14" fill="#fdf6dc"/><rect x="11" y="3" width="1" height="14" fill="#fdf6dc"/><rect x="12" y="4" width="1" height="13" fill="#fdf6dc"/><rect x="13" y="5" width="1" height="12" fill="#fdf6dc"/><rect x="11" y="3" width="1" height="3" fill="#c8c8c8"/><rect x="11" y="5" width="3" height="1" fill="#c8c8c8"/><rect x="5" y="8" width="1" height="1" fill="#303030"/><rect x="7" y="8" width="5" height="1" fill="#7a78b8"/><rect x="5" y="11" width="1" height="1" fill="#303030"/><rect x="7" y="11" width="3" height="1" fill="#7a78b8"/><rect x="5" y="14" width="1" height="1" fill="#303030"/><rect x="7" y="14" width="3" height="1" fill="#7a78b8"/><path d="M9.8 10.6 H13.4 V8.8 L17.9 12.5 L13.4 16.2 V14.4 H9.8 Z" fill="#62d662" stroke="#4cbc4c" stroke-width="0.7" shape-rendering="geometricPrecision"/><path d="M10.3 11.3 H14 V10.2 L16.4 12.2" fill="none" stroke="#a8f0a8" stroke-width="0.8" shape-rendering="geometricPrecision"/></svg>
<div class="a" style="left:182px;top:57px;width:1px;height:18px;background:#9a9a9a"></div>
<svg style="position:absolute;left:192px;top:58px;" width="13" height="16" viewBox="0 0 13 16" shape-rendering="crispEdges"><defs><linearGradient id="hp" x1="0" y1="0" x2="1" y2="1"><stop offset="0" stop-color="#5a78d8"/><stop offset="1" stop-color="#3a58c0"/></linearGradient></defs><rect x="0" y="0" width="13" height="16" fill="url(#hp)"/><rect x="0" y="0" width="3" height="16" fill="#1c3a9c"/><rect x="12" y="0" width="1" height="16" fill="#2a48b0"/><rect x="0" y="15" width="13" height="1" fill="#1c3a9c"/><path d="M5 5 C5 2.5 9.5 2.2 9.5 5 C9.5 7 7.4 7.2 7.4 9.8" fill="none" stroke="#fff" stroke-width="2" shape-rendering="geometricPrecision"/><circle cx="7.4" cy="12.6" r="1.2" fill="#fff" shape-rendering="geometricPrecision"/></svg>
<svg style="position:absolute;left:210px;top:56px;" width="24" height="21" viewBox="0 0 24 21" shape-rendering="crispEdges"><rect x="4" y="5" width="16" height="13" fill="#6e7680"/><rect x="5" y="6" width="14" height="11" fill="#ffffff"/><rect x="5" y="6" width="10" height="1" fill="#d8dde2"/><rect x="16" y="6" width="1" height="1" fill="#6e7680"/><rect x="18" y="6" width="1" height="1" fill="#6e7680"/><rect x="5" y="7" width="14" height="1" fill="#6e7680"/><rect x="5" y="8" width="14" height="1" fill="#d8dde2"/><rect x="5" y="9" width="14" height="1" fill="#6e7680"/><rect x="14" y="10" width="1" height="7" fill="#6e7680"/><rect x="5" y="10" width="9" height="7" fill="#f2f2f2"/><rect x="16" y="11" width="2" height="1" fill="#3c7ed0"/><rect x="16" y="13" width="2" height="1" fill="#3c7ed0"/><rect x="16" y="15" width="2" height="1" fill="#3c7ed0"/><path d="M8 10.8 L11.2 13.5 L8 16.2 Z" fill="#38b838" shape-rendering="geometricPrecision"/></svg>
</body></html>
